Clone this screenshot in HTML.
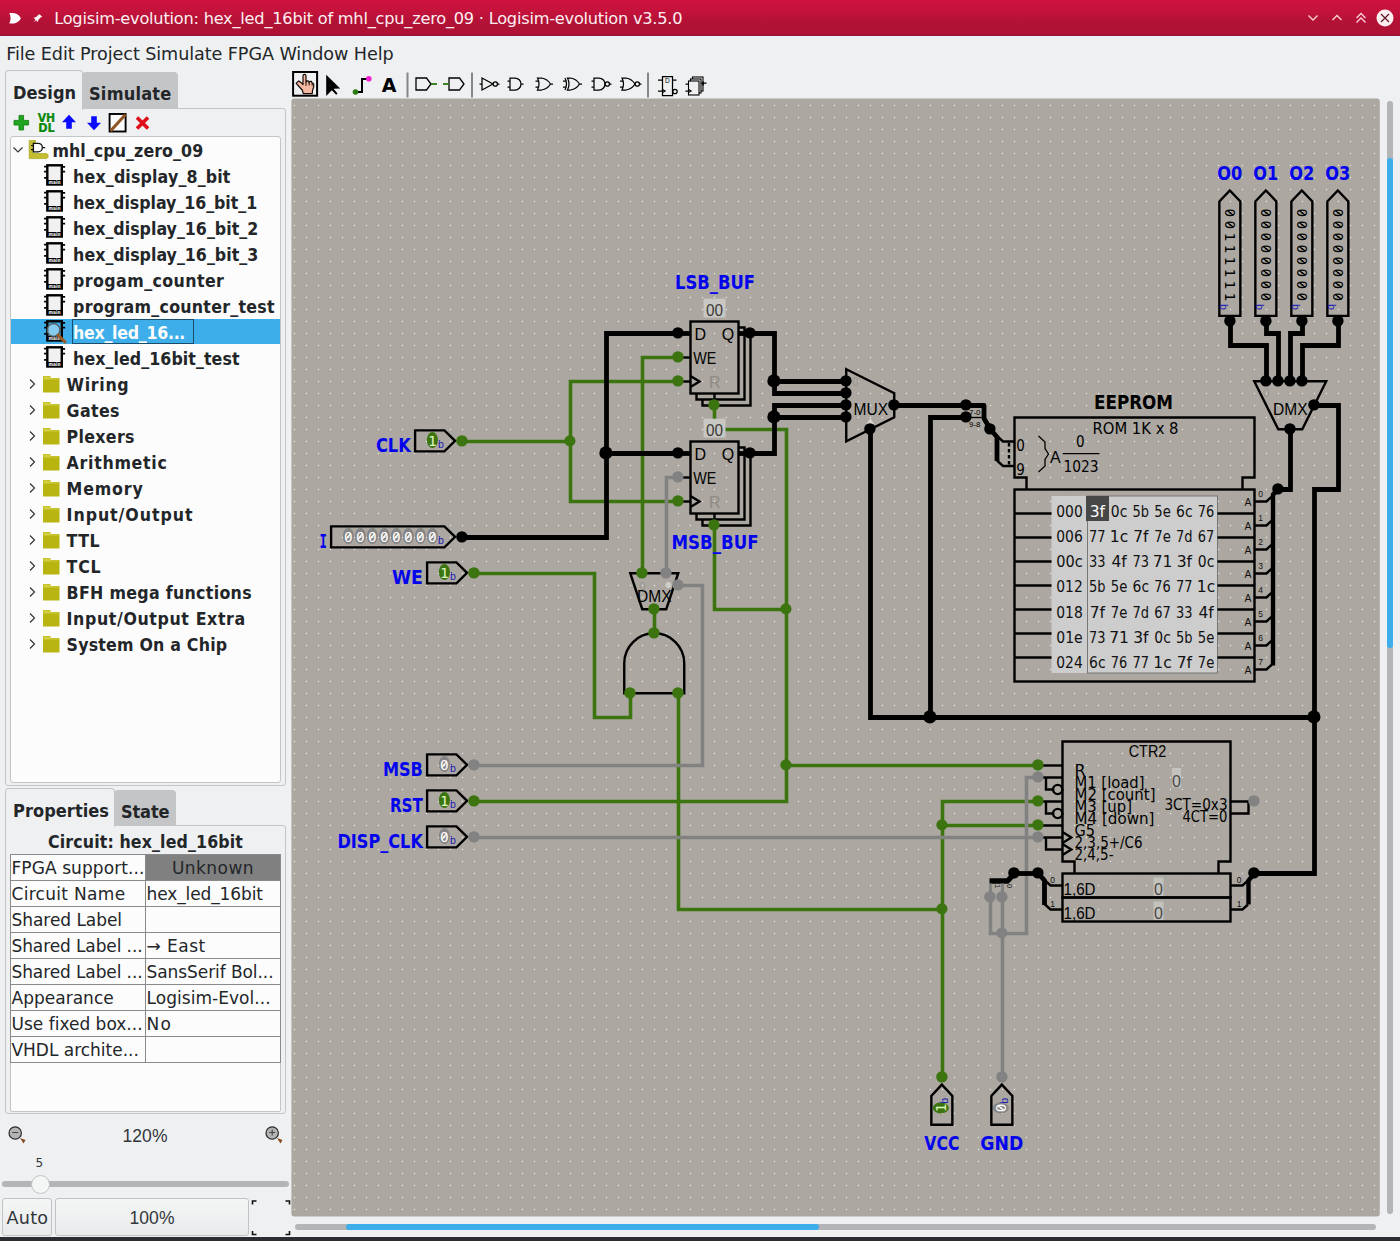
<!DOCTYPE html>
<html lang="en"><head><meta charset="utf-8"><title>Logisim-evolution</title>
<style>
*{box-sizing:border-box;margin:0;padding:0}
html,body{width:1400px;height:1241px;overflow:hidden;background:#eff0f1}
body{position:relative;font-family:"DejaVu Sans","Liberation Sans",sans-serif;font-size:17.6px;color:#232629}
.abs{position:absolute}
.t{position:absolute;white-space:nowrap;line-height:1}
.b{font-family:"DejaVu Sans Condensed","DejaVu Sans","Liberation Sans",sans-serif;font-weight:bold}
#titlebar{left:0;top:0;width:1400px;height:36px;background:linear-gradient(#cf1240 0%,#c4123b 30%,#b31236 60%,#ad1234 96%,#8f1838 100%)}
#titleline{left:0;top:36px;width:1400px;height:1px;background:#e0f2fc}
#bottombar{left:0;top:1237px;width:1400px;height:4px;background:#2a2e32}
.tabpanel{border:1px solid #c3c5c7;border-radius:3px;background:#eff0f1}
.tab{border:1px solid #c3c5c7;border-bottom:none;border-radius:4px 4px 0 0;background:#eff0f1}
.tabin{background:#c4c5c6;border-radius:4px 4px 0 0}
.white{background:#fcfcfc;border:1px solid #c3c5c7;border-radius:3px}
.cell{position:absolute;border:1px solid #8a8a8a;background:#fcfcfc}
.btn{border:1px solid #c0c2c4;border-radius:3px;background:linear-gradient(#f4f5f5,#e9eaeb)}
</style></head>
<body>
<div class="abs" id="titlebar"></div><div class="abs" id="titleline"></div><div class="abs" id="bottombar"></div>
<svg class="abs" style="left:0;top:0" width="60" height="36" viewBox="0 0 60 36">
<path d="M9.3 13 L12.5 13 C17 13 19.8 15.8 20.8 18.3 C19.8 20.8 17 23.6 12.5 23.6 L9.3 23.6 C11 20.3 11 16.3 9.3 13 Z" fill="#fff"/>
<g fill="#fff" stroke="none"><path d="M39.6 14.2 L42.2 16.8 L40.6 17.4 L38.4 19.8 L37.8 22 L33.6 17.8 L35.8 17.2 L38.2 15 Z"/><path d="M35.6 20.2 L34 21.8 L33.8 21.6 Z" /><path d="M35.9 19.6 L36.4 20.1 L33.6 22.6 Z"/></g>
</svg>
<div class="t " id="x" style="left:54.2px;top:19.3px;transform:translateY(-50%);font-size:16.2px;color:#fdeef1;letter-spacing:-0.227px;">Logisim-evolution: hex_led_16bit of mhl_cpu_zero_09 · Logisim-evolution v3.5.0</div>
<svg class="abs" style="left:1300px;top:0" width="100" height="36" viewBox="1300 0 100 36">
<g fill="none" stroke="#ffd3db" stroke-width="1.3"><path d="M1308.5 15.5 L1313 20 L1317.5 15.5"/><path d="M1332.5 20 L1337 15.5 L1341.5 20"/>
<path d="M1356.5 18 L1361 13.5 L1365.5 18"/><path d="M1356.5 22.5 L1361 18 L1365.5 22.5"/></g>
<circle cx="1385" cy="18" r="8.5" fill="#fdeef0"/><path d="M1381 14 L1389 22 M1389 14 L1381 22" stroke="#5e1727" stroke-width="1.2" fill="none"/>
</svg>
<div class="t " id="menu" style="left:6.2px;top:54.7px;transform:translateY(-50%);letter-spacing:-0.081px;">File Edit Project Simulate FPGA Window Help</div>
<div class="abs tabpanel" style="left:5px;top:108px;width:281px;height:678px"></div>
<div class="abs tabin" style="left:82px;top:72px;width:96px;height:37px"></div>
<div class="abs tab" style="left:5px;top:70px;width:78px;height:40px"></div>
<div class="t b" id="design" style="left:13px;top:92.5px;transform:translateY(-50%);font-size:18px;letter-spacing:0.07px;">Design</div>
<div class="t b" id="simulate" style="left:89px;top:93.5px;transform:translateY(-50%);font-size:18px;letter-spacing:0.21px;">Simulate</div>
<svg class="abs" style="left:8px;top:110px" width="150" height="26" viewBox="8 110 150 26">
<path d="M19 115.4 h4.6 v5 h5 v4.6 h-5 v5 h-4.6 v-5 h-5 v-4.6 h5z" fill="#1fa51f" stroke="#0c7a0c" stroke-width="0.8"/>
<g font-family="DejaVu Sans Condensed,DejaVu Sans,Liberation Sans,sans-serif" font-weight="bold" font-size="11.5" fill="#0a8a0a" stroke="#0a8a0a" stroke-width="0.2" text-anchor="middle"><text x="46.4" y="122.3" textLength="17.5" lengthAdjust="spacingAndGlyphs">VH</text><text x="46.4" y="132.4" textLength="16.5" lengthAdjust="spacingAndGlyphs">DL</text></g>
<path d="M69 114.8 l7 7.5 h-4.2 v6.5 h-5.6 v-6.5 h-4.200z" fill="#0a0aff"/>
<path d="M94 130.2 l7 -7.5 h-4.2 v-6.5 h-5.6 v6.5 h-4.200z" fill="#0a0aff"/>
<rect x="109.6" y="114" width="16" height="17.5" fill="#fcfcfc" stroke="#000" stroke-width="1.9"/><path d="M110.5 131 L125.5 114.5" stroke="#8f5320" stroke-width="3" fill="none"/>
<path d="M137 117.5 l11 11 M148 117.5 l-11 11" stroke="#e0101a" stroke-width="3.6" fill="none"/>
</svg>
<div class="abs white" style="left:10px;top:136px;width:271px;height:647px"></div>
<div class="abs" style="left:11px;top:319px;width:269px;height:25px;background:#3daee9"></div>
<div class="abs" style="left:72px;top:319px;width:122px;height:25px;border:1px solid #1a4d6c;background:#3daee9"></div>
<svg class="abs" style="left:10px;top:137px" width="60" height="26" viewBox="10 137 60 26">
<path d="M13.5 147.5 l4.5 4.5 l4.5 -4.5" fill="none" stroke="#31363b" stroke-width="1.2"/>
<path d="M29.2 140.5 h6.3 v2.2 h-2.3 v10.8 h13.6 l1.3 1.4 v2.3 l-1.2 1.4 h-17.700z" fill="#c2be30" stroke="#a9a51e" stroke-width="0.7"/>
<path d="M33.4 143.3 h4.7 a4.3 4.3 0 0 1 0 8.6 h-4.700z" fill="#fcfcfc" stroke="#111" stroke-width="1.3"/><path d="M31 145.5 h2.4 M31 149.6 h2.4 M42.4 147.6 h2.8" stroke="#111" stroke-width="1.2"/>
</svg>
<div class="t b" id="root" style="left:52.4px;top:152px;transform:translateY(-50%);letter-spacing:0.087px;">mhl_cpu_zero_09</div>
<svg class="abs" style="left:42px;top:163px" width="28" height="26" viewBox="0 0 28 26">
<rect x="5.3" y="2.3" width="14.5" height="19.2" fill="#f1f1f1" stroke="#000" stroke-width="2.4"/>
<path d="M2.1 3.6 h2.4 M2.1 8.7 h2.4 M2.1 14.9 h2.4 M20.8 3.8 h2.3 M20.8 8.7 h2.3" stroke="#000" stroke-width="1.7"/>
<rect x="5.3" y="17" width="14.5" height="5" fill="#000"/>
<text x="12.6" y="21.3" font-size="5.2" font-weight="bold" text-anchor="middle" fill="#fcfcfc" font-family="DejaVu Sans,Liberation Sans,sans-serif" textLength="12" lengthAdjust="spacingAndGlyphs">main</text>
</svg>
<div class="t b" id="item0" style="left:73.1px;top:178px;transform:translateY(-50%);letter-spacing:0.164px;">hex_display_8_bit</div>
<svg class="abs" style="left:42px;top:189px" width="28" height="26" viewBox="0 0 28 26">
<rect x="5.3" y="2.3" width="14.5" height="19.2" fill="#f1f1f1" stroke="#000" stroke-width="2.4"/>
<path d="M2.1 3.6 h2.4 M2.1 8.7 h2.4 M2.1 14.9 h2.4 M20.8 3.8 h2.3 M20.8 8.7 h2.3" stroke="#000" stroke-width="1.7"/>
<rect x="5.3" y="17" width="14.5" height="5" fill="#000"/>
<text x="12.6" y="21.3" font-size="5.2" font-weight="bold" text-anchor="middle" fill="#fcfcfc" font-family="DejaVu Sans,Liberation Sans,sans-serif" textLength="12" lengthAdjust="spacingAndGlyphs">main</text>
</svg>
<div class="t b" id="item1" style="left:73.1px;top:204px;transform:translateY(-50%);letter-spacing:-0.027px;">hex_display_16_bit_1</div>
<svg class="abs" style="left:42px;top:215px" width="28" height="26" viewBox="0 0 28 26">
<rect x="5.3" y="2.3" width="14.5" height="19.2" fill="#f1f1f1" stroke="#000" stroke-width="2.4"/>
<path d="M2.1 3.6 h2.4 M2.1 8.7 h2.4 M2.1 14.9 h2.4 M20.8 3.8 h2.3 M20.8 8.7 h2.3" stroke="#000" stroke-width="1.7"/>
<rect x="5.3" y="17" width="14.5" height="5" fill="#000"/>
<text x="12.6" y="21.3" font-size="5.2" font-weight="bold" text-anchor="middle" fill="#fcfcfc" font-family="DejaVu Sans,Liberation Sans,sans-serif" textLength="12" lengthAdjust="spacingAndGlyphs">main</text>
</svg>
<div class="t b" id="item2" style="left:73.1px;top:230px;transform:translateY(-50%);letter-spacing:0.026px;">hex_display_16_bit_2</div>
<svg class="abs" style="left:42px;top:241px" width="28" height="26" viewBox="0 0 28 26">
<rect x="5.3" y="2.3" width="14.5" height="19.2" fill="#f1f1f1" stroke="#000" stroke-width="2.4"/>
<path d="M2.1 3.6 h2.4 M2.1 8.7 h2.4 M2.1 14.9 h2.4 M20.8 3.8 h2.3 M20.8 8.7 h2.3" stroke="#000" stroke-width="1.7"/>
<rect x="5.3" y="17" width="14.5" height="5" fill="#000"/>
<text x="12.6" y="21.3" font-size="5.2" font-weight="bold" text-anchor="middle" fill="#fcfcfc" font-family="DejaVu Sans,Liberation Sans,sans-serif" textLength="12" lengthAdjust="spacingAndGlyphs">main</text>
</svg>
<div class="t b" id="item3" style="left:73.1px;top:256px;transform:translateY(-50%);letter-spacing:0.026px;">hex_display_16_bit_3</div>
<svg class="abs" style="left:42px;top:267px" width="28" height="26" viewBox="0 0 28 26">
<rect x="5.3" y="2.3" width="14.5" height="19.2" fill="#f1f1f1" stroke="#000" stroke-width="2.4"/>
<path d="M2.1 3.6 h2.4 M2.1 8.7 h2.4 M2.1 14.9 h2.4 M20.8 3.8 h2.3 M20.8 8.7 h2.3" stroke="#000" stroke-width="1.7"/>
<rect x="5.3" y="17" width="14.5" height="5" fill="#000"/>
<text x="12.6" y="21.3" font-size="5.2" font-weight="bold" text-anchor="middle" fill="#fcfcfc" font-family="DejaVu Sans,Liberation Sans,sans-serif" textLength="12" lengthAdjust="spacingAndGlyphs">main</text>
</svg>
<div class="t b" id="item4" style="left:73.1px;top:282px;transform:translateY(-50%);letter-spacing:0.419px;">progam_counter</div>
<svg class="abs" style="left:42px;top:293px" width="28" height="26" viewBox="0 0 28 26">
<rect x="5.3" y="2.3" width="14.5" height="19.2" fill="#f1f1f1" stroke="#000" stroke-width="2.4"/>
<path d="M2.1 3.6 h2.4 M2.1 8.7 h2.4 M2.1 14.9 h2.4 M20.8 3.8 h2.3 M20.8 8.7 h2.3" stroke="#000" stroke-width="1.7"/>
<rect x="5.3" y="17" width="14.5" height="5" fill="#000"/>
<text x="12.6" y="21.3" font-size="5.2" font-weight="bold" text-anchor="middle" fill="#fcfcfc" font-family="DejaVu Sans,Liberation Sans,sans-serif" textLength="12" lengthAdjust="spacingAndGlyphs">main</text>
</svg>
<div class="t b" id="item5" style="left:73.1px;top:308px;transform:translateY(-50%);letter-spacing:0.27px;">program_counter_test</div>
<svg class="abs" style="left:42px;top:319px" width="28" height="26" viewBox="0 0 28 26">
<rect x="5.3" y="2.3" width="14.5" height="19.2" fill="#3daee9" stroke="#000" stroke-width="2.4"/>
<path d="M2.1 3.6 h2.4 M2.1 8.7 h2.4 M2.1 14.9 h2.4 M20.8 3.8 h2.3 M20.8 8.7 h2.3" stroke="#000" stroke-width="1.7"/>
<rect x="5.3" y="17" width="14.5" height="5" fill="#000"/>
<text x="12.6" y="21.3" font-size="5.2" font-weight="bold" text-anchor="middle" fill="#fcfcfc" font-family="DejaVu Sans,Liberation Sans,sans-serif" textLength="12" lengthAdjust="spacingAndGlyphs">main</text>
<circle cx="11.5" cy="11" r="6.3" fill="#cfe9f8" fill-opacity="0.5" stroke="#5a5a5a" stroke-width="1.2"/><path d="M16 16 L23 23" stroke="#9a5a20" stroke-width="3" stroke-linecap="round"/></svg>
<div class="t b" id="item6" style="left:73.1px;top:334px;transform:translateY(-50%);color:#fcfcfc;letter-spacing:-0.276px;">hex_led_16...</div>
<svg class="abs" style="left:42px;top:345px" width="28" height="26" viewBox="0 0 28 26">
<rect x="5.3" y="2.3" width="14.5" height="19.2" fill="#f1f1f1" stroke="#000" stroke-width="2.4"/>
<path d="M2.1 3.6 h2.4 M2.1 8.7 h2.4 M2.1 14.9 h2.4 M20.8 3.8 h2.3 M20.8 8.7 h2.3" stroke="#000" stroke-width="1.7"/>
<rect x="5.3" y="17" width="14.5" height="5" fill="#000"/>
<text x="12.6" y="21.3" font-size="5.2" font-weight="bold" text-anchor="middle" fill="#fcfcfc" font-family="DejaVu Sans,Liberation Sans,sans-serif" textLength="12" lengthAdjust="spacingAndGlyphs">main</text>
</svg>
<div class="t b" id="item7" style="left:73.1px;top:360px;transform:translateY(-50%);letter-spacing:0.077px;">hex_led_16bit_test</div>
<svg class="abs" style="left:26px;top:371px" width="36" height="26" viewBox="0 0 36 26">
<path d="M4 8.5 l4.5 4.5 l-4.5 4.5" fill="none" stroke="#31363b" stroke-width="1.2"/>
<path d="M17 5 h7.5 v2 h9 v14.5 h-16.500z" fill="#b9b510"/><path d="M17.4 5.4 h6.7 v2 h9 v1.2 h-15.700z" fill="#d2cf45"/>
</svg>
<div class="t b" id="lib0" style="left:66.6px;top:386px;transform:translateY(-50%);letter-spacing:0.676px;">Wiring</div>
<svg class="abs" style="left:26px;top:397px" width="36" height="26" viewBox="0 0 36 26">
<path d="M4 8.5 l4.5 4.5 l-4.5 4.5" fill="none" stroke="#31363b" stroke-width="1.2"/>
<path d="M17 5 h7.5 v2 h9 v14.5 h-16.500z" fill="#b9b510"/><path d="M17.4 5.4 h6.7 v2 h9 v1.2 h-15.700z" fill="#d2cf45"/>
</svg>
<div class="t b" id="lib1" style="left:66.6px;top:412px;transform:translateY(-50%);letter-spacing:0.373px;">Gates</div>
<svg class="abs" style="left:26px;top:423px" width="36" height="26" viewBox="0 0 36 26">
<path d="M4 8.5 l4.5 4.5 l-4.5 4.5" fill="none" stroke="#31363b" stroke-width="1.2"/>
<path d="M17 5 h7.5 v2 h9 v14.5 h-16.500z" fill="#b9b510"/><path d="M17.4 5.4 h6.7 v2 h9 v1.2 h-15.700z" fill="#d2cf45"/>
</svg>
<div class="t b" id="lib2" style="left:66.6px;top:438px;transform:translateY(-50%);letter-spacing:0.327px;">Plexers</div>
<svg class="abs" style="left:26px;top:449px" width="36" height="26" viewBox="0 0 36 26">
<path d="M4 8.5 l4.5 4.5 l-4.5 4.5" fill="none" stroke="#31363b" stroke-width="1.2"/>
<path d="M17 5 h7.5 v2 h9 v14.5 h-16.500z" fill="#b9b510"/><path d="M17.4 5.4 h6.7 v2 h9 v1.2 h-15.700z" fill="#d2cf45"/>
</svg>
<div class="t b" id="lib3" style="left:66.6px;top:464px;transform:translateY(-50%);letter-spacing:0.696px;">Arithmetic</div>
<svg class="abs" style="left:26px;top:475px" width="36" height="26" viewBox="0 0 36 26">
<path d="M4 8.5 l4.5 4.5 l-4.5 4.5" fill="none" stroke="#31363b" stroke-width="1.2"/>
<path d="M17 5 h7.5 v2 h9 v14.5 h-16.500z" fill="#b9b510"/><path d="M17.4 5.4 h6.7 v2 h9 v1.2 h-15.700z" fill="#d2cf45"/>
</svg>
<div class="t b" id="lib4" style="left:66.6px;top:490px;transform:translateY(-50%);letter-spacing:0.84px;">Memory</div>
<svg class="abs" style="left:26px;top:501px" width="36" height="26" viewBox="0 0 36 26">
<path d="M4 8.5 l4.5 4.5 l-4.5 4.5" fill="none" stroke="#31363b" stroke-width="1.2"/>
<path d="M17 5 h7.5 v2 h9 v14.5 h-16.500z" fill="#b9b510"/><path d="M17.4 5.4 h6.7 v2 h9 v1.2 h-15.700z" fill="#d2cf45"/>
</svg>
<div class="t b" id="lib5" style="left:66.6px;top:516px;transform:translateY(-50%);letter-spacing:0.938px;">Input/Output</div>
<svg class="abs" style="left:26px;top:527px" width="36" height="26" viewBox="0 0 36 26">
<path d="M4 8.5 l4.5 4.5 l-4.5 4.5" fill="none" stroke="#31363b" stroke-width="1.2"/>
<path d="M17 5 h7.5 v2 h9 v14.5 h-16.500z" fill="#b9b510"/><path d="M17.4 5.4 h6.7 v2 h9 v1.2 h-15.700z" fill="#d2cf45"/>
</svg>
<div class="t b" id="lib6" style="left:66.6px;top:542px;transform:translateY(-50%);letter-spacing:0.503px;">TTL</div>
<svg class="abs" style="left:26px;top:553px" width="36" height="26" viewBox="0 0 36 26">
<path d="M4 8.5 l4.5 4.5 l-4.5 4.5" fill="none" stroke="#31363b" stroke-width="1.2"/>
<path d="M17 5 h7.5 v2 h9 v14.5 h-16.500z" fill="#b9b510"/><path d="M17.4 5.4 h6.7 v2 h9 v1.2 h-15.700z" fill="#d2cf45"/>
</svg>
<div class="t b" id="lib7" style="left:66.6px;top:568px;transform:translateY(-50%);letter-spacing:0.8px;">TCL</div>
<svg class="abs" style="left:26px;top:579px" width="36" height="26" viewBox="0 0 36 26">
<path d="M4 8.5 l4.5 4.5 l-4.5 4.5" fill="none" stroke="#31363b" stroke-width="1.2"/>
<path d="M17 5 h7.5 v2 h9 v14.5 h-16.500z" fill="#b9b510"/><path d="M17.4 5.4 h6.7 v2 h9 v1.2 h-15.700z" fill="#d2cf45"/>
</svg>
<div class="t b" id="lib8" style="left:66.6px;top:594px;transform:translateY(-50%);letter-spacing:0.309px;">BFH mega functions</div>
<svg class="abs" style="left:26px;top:605px" width="36" height="26" viewBox="0 0 36 26">
<path d="M4 8.5 l4.5 4.5 l-4.5 4.5" fill="none" stroke="#31363b" stroke-width="1.2"/>
<path d="M17 5 h7.5 v2 h9 v14.5 h-16.500z" fill="#b9b510"/><path d="M17.4 5.4 h6.7 v2 h9 v1.2 h-15.700z" fill="#d2cf45"/>
</svg>
<div class="t b" id="lib9" style="left:66.6px;top:620px;transform:translateY(-50%);letter-spacing:0.614px;">Input/Output Extra</div>
<svg class="abs" style="left:26px;top:631px" width="36" height="26" viewBox="0 0 36 26">
<path d="M4 8.5 l4.5 4.5 l-4.5 4.5" fill="none" stroke="#31363b" stroke-width="1.2"/>
<path d="M17 5 h7.5 v2 h9 v14.5 h-16.500z" fill="#b9b510"/><path d="M17.4 5.4 h6.7 v2 h9 v1.2 h-15.700z" fill="#d2cf45"/>
</svg>
<div class="t b" id="lib10" style="left:66.6px;top:646px;transform:translateY(-50%);letter-spacing:0.199px;">System On a Chip</div>
<div class="abs tabpanel" style="left:5px;top:825px;width:281px;height:289px"></div>
<div class="abs tabin" style="left:114px;top:790px;width:62px;height:36px"></div>
<div class="abs tab" style="left:5px;top:788px;width:110px;height:39px"></div>
<div class="t b" id="props" style="left:13px;top:810.5px;transform:translateY(-50%);font-size:18px;letter-spacing:0.059px;">Properties</div>
<div class="t b" id="state" style="left:121px;top:811.5px;transform:translateY(-50%);font-size:18px;letter-spacing:-0.141px;">State</div>
<div class="abs white" style="left:10px;top:854px;width:271px;height:258px;border-radius:2px"></div>
<div class="t b" id="ptitle" style="left:10px;width:271px;text-align:center;top:843px;transform:translateY(-50%);letter-spacing:0.124px;">Circuit: hex_led_16bit</div>
<div class="cell" style="left:10px;top:854px;width:136px;height:27px"></div><div class="cell" style="left:145px;top:854px;width:136px;height:27px;background:#808080;"></div>
<div class="t " id="pa0" style="left:11.5px;top:867.8px;transform:translateY(-50%);font-size:17px;letter-spacing:0.084px;">FPGA support...</div>
<div class="t" id="pb0" style="left:146px;width:134px;text-align:center;font-size:17px;top:867.8px;transform:translateY(-50%);letter-spacing:0.446px;">Unknown</div>
<div class="cell" style="left:10px;top:880px;width:136px;height:27px"></div><div class="cell" style="left:145px;top:880px;width:136px;height:27px;"></div>
<div class="t " id="pa1" style="left:11.5px;top:893.8px;transform:translateY(-50%);font-size:17px;letter-spacing:0.302px;">Circuit Name</div>
<div class="t " id="pb1" style="left:146.5px;top:893.8px;transform:translateY(-50%);font-size:17px;letter-spacing:-0.115px;">hex_led_16bit</div>
<div class="cell" style="left:10px;top:906px;width:136px;height:27px"></div><div class="cell" style="left:145px;top:906px;width:136px;height:27px;"></div>
<div class="t " id="pa2" style="left:11.5px;top:919.8px;transform:translateY(-50%);font-size:17px;letter-spacing:-0.048px;">Shared Label</div>
<div class="cell" style="left:10px;top:932px;width:136px;height:27px"></div><div class="cell" style="left:145px;top:932px;width:136px;height:27px;"></div>
<div class="t " id="pa3" style="left:11.5px;top:945.8px;transform:translateY(-50%);font-size:17px;letter-spacing:-0.109px;">Shared Label ...</div>
<div class="t " id="pb3" style="left:146.5px;top:945.8px;transform:translateY(-50%);font-size:17px;letter-spacing:0.471px;">→ East</div>
<div class="cell" style="left:10px;top:958px;width:136px;height:27px"></div><div class="cell" style="left:145px;top:958px;width:136px;height:27px;"></div>
<div class="t " id="pa4" style="left:11.5px;top:971.8px;transform:translateY(-50%);font-size:17px;letter-spacing:-0.109px;">Shared Label ...</div>
<div class="t " id="pb4" style="left:146.5px;top:971.8px;transform:translateY(-50%);font-size:17px;letter-spacing:-0.074px;">SansSerif Bol...</div>
<div class="cell" style="left:10px;top:984px;width:136px;height:27px"></div><div class="cell" style="left:145px;top:984px;width:136px;height:27px;"></div>
<div class="t " id="pa5" style="left:11.5px;top:997.8px;transform:translateY(-50%);font-size:17px;letter-spacing:0.014px;">Appearance</div>
<div class="t " id="pb5" style="left:146.5px;top:997.8px;transform:translateY(-50%);font-size:17px;letter-spacing:0.043px;">Logisim-Evol...</div>
<div class="cell" style="left:10px;top:1010px;width:136px;height:27px"></div><div class="cell" style="left:145px;top:1010px;width:136px;height:27px;"></div>
<div class="t " id="pa6" style="left:11.5px;top:1023.8px;transform:translateY(-50%);font-size:17px;letter-spacing:0.006px;">Use fixed box...</div>
<div class="t " id="pb6" style="left:146.5px;top:1023.8px;transform:translateY(-50%);font-size:17px;letter-spacing:1.375px;">No</div>
<div class="cell" style="left:10px;top:1036px;width:136px;height:27px"></div><div class="cell" style="left:145px;top:1036px;width:136px;height:27px;"></div>
<div class="t " id="pa7" style="left:11.5px;top:1049.8px;transform:translateY(-50%);font-size:17px;letter-spacing:-0.021px;">VHDL archite...</div>
<svg class="abs" style="left:4px;top:1122px" width="284" height="26" viewBox="4 1122 284 26">
<g fill="#b4b4b4" stroke="#2a2a2a" stroke-width="1.2"><circle cx="15.2" cy="1133" r="6.2"/><circle cx="272.2" cy="1133" r="6.2"/></g>
<path d="M12.2 1132.5 h6 M269.2 1132.5 h6 M272.2 1129.5 v6" stroke="#444" stroke-width="1.1"/>
<path d="M20 1138 L25.5 1140 L23.5 1143.5 Z M277 1138 L282.5 1140 L280.5 1143.5 Z" fill="#8a4a1c"/>
</svg>
<div class="t" id="z120" style="left:95px;width:100px;text-align:center;top:1137px;transform:translateY(-50%);color:#31363b;font-family:Liberation Sans,sans-serif;font-size:17.5px;letter-spacing:0.111px;">120%</div>
<div class="t " style="left:35.5px;top:1163px;transform:translateY(-50%);font-size:12px;color:#31363b;">5</div>
<div class="abs" style="left:2px;top:1181px;width:287px;height:6px;border-radius:3px;background:#b3b5b7"></div>
<div class="abs" style="left:31px;top:1174.500px;width:19px;height:19px;border-radius:10px;background:#f4f5f5;border:1px solid #c2c4c6"></div>
<div class="abs btn" style="left:2px;top:1198px;width:50px;height:38px"></div>
<div class="abs btn" style="left:54.500px;top:1198px;width:194px;height:38px"></div>
<div class="t " id="auto" style="left:6.5px;top:1218.7px;transform:translateY(-50%);color:#31363b;letter-spacing:0.247px;">Auto</div>
<div class="t" id="z100" style="left:55px;width:194px;text-align:center;top:1218.700px;transform:translateY(-50%);color:#31363b;font-family:Liberation Sans,sans-serif;font-size:17.5px;letter-spacing:0.111px;">100%</div>
<svg class="abs" style="left:250px;top:1198px" width="42" height="40" viewBox="250 1198 42 40">
<path d="M252.5 1204.5 v-3.5 h4 M285.5 1201 h4 v3.5 M252.5 1231 v3.5 h4 M285.5 1234.5 h4 v-3.5" fill="none" stroke="#111" stroke-width="1.6"/></svg>
<svg class="abs" style="left:288px;top:68px" width="440" height="32" viewBox="288 68 440 32"><rect x="293.1" y="72" width="24" height="23.7" fill="#f0f1f2" stroke="#000" stroke-width="2"/><path d="M296.2 83.3 L298.8 80.9 L301.2 82.7 L303 84.6 V76 Q303 74.4 304.5 74.4 Q306 74.4 306 76 V82.3 L306.9 80.9 L308.3 80.9 L309.2 82.7 L310 81.3 L311.3 81.3 L312.2 83.2 L312.7 83 L313.7 84.2 V87 L312.6 90 L312.2 93.7 H303.4 L302.2 90 L299 86.5 Z" fill="#f3b9a2" stroke="#150c08" stroke-width="1.2" stroke-linejoin="round"/><path d="M306 82.3 V85.8 M309.2 82.7 V85.4 M312.2 83.4 V85.6" stroke="#150c08" stroke-width="1" fill="none"/><path d="M326.2 74.8 V96 L331.8 90.3 L336.2 94.8 L337.5 93.6 L333.6 88.8 L340.2 88.6 Z" fill="#000"/><path d="M356 92 H362 V79 H368.5" fill="none" stroke="#000" stroke-width="2"/><circle cx="355.5" cy="92" r="2.8" fill="#2a7a10"/><circle cx="368.8" cy="78.8" r="2.8" fill="#f020d0"/><text x="389" y="91.5" font-size="19" font-weight="bold" text-anchor="middle" font-family="DejaVu Sans,Liberation Sans,sans-serif" fill="#000">A</text><path d="M407.5 72.5 V97.5" stroke="#85878a" stroke-width="2"/><path d="M472 72.5 V97.5" stroke="#85878a" stroke-width="2"/><path d="M648 72.5 V97.5" stroke="#85878a" stroke-width="2"/><path d="M416 78 h10.5 l4.5 6 l-4.5 6 h-10.500z" fill="none" stroke="#000" stroke-width="1.3"/><path d="M431 84 h6" stroke="#2a7a10" stroke-width="1.8"/><path d="M449 78 h10.5 l4.5 6 l-4.5 6 h-10.500z" fill="none" stroke="#000" stroke-width="1.3"/><path d="M443 84 h6" stroke="#2a7a10" stroke-width="1.8"/><path d="M482 78 v12 l11 -6z M479.5 84 h2.5 M497.5 84 h2" fill="none" stroke="#000" stroke-width="1.250"/><circle cx="495.3" cy="84" r="2.2" fill="none" stroke="#000" stroke-width="1.250"/><path d="M510 78 h5 a6 6 0 0 1 0 12 h-5z M507.5 81 h2.5 M507.5 87 h2.5 M521 84 h2.5" fill="none" stroke="#000" stroke-width="1.250"/><path d="M537.5 78 h4 q6 1 9 6 q-3 5 -9 6 h-4 q3 -6 0 -12z M535.5 81 h3 M535.5 87 h3 M550.5 84 h2.5" fill="none" stroke="#000" stroke-width="1.250"/><path d="M567.5 78 h3 q6 1 9 6 q-3 5 -9 6 h-3 q3 -6 0 -12z M565 78 q3 6 0 12 M563 81 h3.5 M563 87 h3.5 M579.5 84 h2.5" fill="none" stroke="#000" stroke-width="1.250"/><path d="M594 78 h5 a6 6 0 0 1 0 12 h-5z M591.5 81 h2.5 M591.5 87 h2.5 M609.5 84 h2" fill="none" stroke="#000" stroke-width="1.250"/><circle cx="607.3" cy="84" r="2.2" fill="none" stroke="#000" stroke-width="1.250"/><path d="M622 78 h4 q6 1 9 6 q-3 5 -9 6 h-4 q3 -6 0 -12z M620 81 h3 M620 87 h3 M639.5 84 h2" fill="none" stroke="#000" stroke-width="1.250"/><circle cx="637.3" cy="84" r="2.2" fill="none" stroke="#000" stroke-width="1.250"/><path d="M662.5 76.5 h10 v19 h-10z M658 80 h4.5 M658 91 h4.5 M672.5 80 h4 M662.5 89.5 l2.5 1.5 l-2.5 1.5" fill="none" stroke="#000" stroke-width="1.250"/><circle cx="675" cy="91.5" r="2.2" fill="none" stroke="#000" stroke-width="1.250"/><text x="667.3" y="83.3" font-size="6.5" text-anchor="middle" font-family="Liberation Sans,sans-serif" fill="#000">D</text><rect x="692.5" y="77" width="10.5" height="14" fill="#eff0f1" stroke="#000" stroke-width="1.1"/><rect x="690.5" y="79" width="10.5" height="14" fill="#eff0f1" stroke="#000" stroke-width="1.1"/><rect x="688.5" y="81" width="10.5" height="14" fill="#eff0f1" stroke="#000" stroke-width="1.1"/><path d="M685.5 84 h3 M685.5 91 h3 M688.5 89.5 l2.5 1.5 l-2.5 1.5 M701 83 h5.5" fill="none" stroke="#000" stroke-width="1.250"/><path d="M703 81.5 v4" stroke="#000" stroke-width="1.6"/></svg>
<div class="abs" style="left:1387px;top:101px;width:6px;height:1113px;border-radius:3px;background:#b3b5b7"></div>
<div class="abs" style="left:1387px;top:158px;width:6px;height:490px;border-radius:3px;background:#3daee9"></div>
<div class="abs" style="left:295px;top:1224px;width:1081px;height:6px;border-radius:3px;background:#b3b5b7"></div>
<div class="abs" style="left:346px;top:1224px;width:473px;height:6px;border-radius:3px;background:#3daee9"></div>
<svg class="abs" style="left:291px;top:98px" width="1089" height="1119" viewBox="291 98 1089 1119">
<defs><pattern id="grid" x="288" y="99" width="12" height="12" patternUnits="userSpaceOnUse"><rect x="5.9" y="5.9" width="1.150" height="1.150" fill="#f2f0eb"/></pattern><clipPath id="cv"><rect x="291.4" y="98.4" width="1088.4" height="1118.2" rx="3"/></clipPath></defs>
<g clip-path="url(#cv)">
<rect x="291" y="98" width="1089" height="1119" fill="#aca8a1"/>
<rect x="291" y="98" width="1089" height="1119" fill="url(#grid)"/>
<g transform="translate(0.5 0.5)">
<path d="M462 441 L570 441" fill="none" stroke="#3c7510" stroke-width="3.6" stroke-linejoin="miter" stroke-linecap="square"/>
<path d="M678 381 L570 381 L570 501 L678 501" fill="none" stroke="#3c7510" stroke-width="3.6" stroke-linejoin="miter" stroke-linecap="square"/>
<path d="M474 573 L594 573 L594 717 L630 717 L630 693" fill="none" stroke="#3c7510" stroke-width="3.6" stroke-linejoin="miter" stroke-linecap="square"/>
<path d="M642 573 L642 357 L678 357" fill="none" stroke="#3c7510" stroke-width="3.6" stroke-linejoin="miter" stroke-linecap="square"/>
<path d="M654 609 L654 633" fill="none" stroke="#3c7510" stroke-width="3.6" stroke-linejoin="miter" stroke-linecap="square"/>
<path d="M474 801 L786 801 L786 429 L714 429 L714 405" fill="none" stroke="#3c7510" stroke-width="3.6" stroke-linejoin="miter" stroke-linecap="square"/>
<path d="M714 525 L714 609 L786 609" fill="none" stroke="#3c7510" stroke-width="3.6" stroke-linejoin="miter" stroke-linecap="square"/>
<path d="M786 765 L1038 765" fill="none" stroke="#3c7510" stroke-width="3.6" stroke-linejoin="miter" stroke-linecap="square"/>
<path d="M678 693 L678 909 L942 909" fill="none" stroke="#3c7510" stroke-width="3.6" stroke-linejoin="miter" stroke-linecap="square"/>
<path d="M942 1077 L942 801 L1038 801" fill="none" stroke="#3c7510" stroke-width="3.6" stroke-linejoin="miter" stroke-linecap="square"/>
<path d="M942 825 L1038 825" fill="none" stroke="#3c7510" stroke-width="3.6" stroke-linejoin="miter" stroke-linecap="square"/>
<path d="M474 765 L702 765 L702 585 L678 585" fill="none" stroke="#828282" stroke-width="3.6" stroke-linejoin="miter" stroke-linecap="square"/>
<path d="M666 573 L666 477 L678 477" fill="none" stroke="#828282" stroke-width="3.6" stroke-linejoin="miter" stroke-linecap="square"/>
<path d="M474 837 L1038 837" fill="none" stroke="#828282" stroke-width="3.6" stroke-linejoin="miter" stroke-linecap="square"/>
<path d="M1002 1077 L1002 897" fill="none" stroke="#828282" stroke-width="3.6" stroke-linejoin="miter" stroke-linecap="square"/>
<path d="M990 897 L990 933 L1026 933 L1026 777 L1038 777" fill="none" stroke="#828282" stroke-width="3.6" stroke-linejoin="miter" stroke-linecap="square"/>
<path d="M462 537 L606 537 L606 333 L678 333" fill="none" stroke="#000" stroke-width="4.8" stroke-linejoin="miter" stroke-linecap="square"/>
<path d="M606 453 L678 453" fill="none" stroke="#000" stroke-width="4.8" stroke-linejoin="miter" stroke-linecap="square"/>
<path d="M750 333 L774 333 L774 393 L846 393" fill="none" stroke="#000" stroke-width="4.8" stroke-linejoin="miter" stroke-linecap="square"/>
<path d="M774 381 L846 381" fill="none" stroke="#000" stroke-width="4.8" stroke-linejoin="miter" stroke-linecap="square"/>
<path d="M750 453 L774 453 L774 405 L846 405" fill="none" stroke="#000" stroke-width="4.8" stroke-linejoin="miter" stroke-linecap="square"/>
<path d="M774 417 L846 417" fill="none" stroke="#000" stroke-width="4.8" stroke-linejoin="miter" stroke-linecap="square"/>
<path d="M894 405 L966 405" fill="none" stroke="#000" stroke-width="4.8" stroke-linejoin="miter" stroke-linecap="square"/>
<path d="M966 417 L930 417 L930 717" fill="none" stroke="#000" stroke-width="4.8" stroke-linejoin="miter" stroke-linecap="square"/>
<path d="M870 429 L870 717 L1314 717 L1314 489 L1338 489 L1338 405 L1314 405" fill="none" stroke="#000" stroke-width="4.8" stroke-linejoin="miter" stroke-linecap="square"/>
<path d="M1314 717 L1314 873 L1254 873" fill="none" stroke="#000" stroke-width="4.8" stroke-linejoin="miter" stroke-linecap="square"/>
<path d="M1278 489 L1290 489 L1290 429" fill="none" stroke="#000" stroke-width="4.8" stroke-linejoin="miter" stroke-linecap="square"/>
<path d="M1230 321 L1230 345 L1266 345 L1266 381" fill="none" stroke="#000" stroke-width="4.8" stroke-linejoin="miter" stroke-linecap="square"/>
<path d="M1266 321 L1266 333 L1278 333 L1278 381" fill="none" stroke="#000" stroke-width="4.8" stroke-linejoin="miter" stroke-linecap="square"/>
<path d="M1302 321 L1302 333 L1290 333 L1290 381" fill="none" stroke="#000" stroke-width="4.8" stroke-linejoin="miter" stroke-linecap="square"/>
<path d="M1338 321 L1338 345 L1302 345 L1302 381" fill="none" stroke="#000" stroke-width="4.8" stroke-linejoin="miter" stroke-linecap="square"/>
<path d="M1014 873 L1038 873" fill="none" stroke="#000" stroke-width="4.8" stroke-linejoin="miter" stroke-linecap="square"/>
<circle cx="569.4" cy="440.4" r="5.6" fill="#3c7510"/>
<circle cx="785.4" cy="608.4" r="5.6" fill="#3c7510"/>
<circle cx="785.4" cy="764.4" r="5.6" fill="#3c7510"/>
<circle cx="941.4" cy="908.4" r="5.6" fill="#3c7510"/>
<circle cx="941.4" cy="824.4" r="5.6" fill="#3c7510"/>
<circle cx="1001.4" cy="932.4" r="5.6" fill="#828282"/>
<circle cx="605.4" cy="452.4" r="6.6" fill="#000"/>
<circle cx="773.4" cy="380.4" r="6.6" fill="#000"/>
<circle cx="773.4" cy="416.4" r="6.6" fill="#000"/>
<circle cx="929.4" cy="716.4" r="6.6" fill="#000"/>
<circle cx="1313.4" cy="716.4" r="6.6" fill="#000"/>
<path d="M678 333 L690 333" fill="none" stroke="#000" stroke-width="4.8" stroke-linecap="butt"/>
<path d="M738 333 L750 333" fill="none" stroke="#000" stroke-width="4.8" stroke-linecap="butt"/>
<path d="M678 357 L690 357" fill="none" stroke="#000" stroke-width="2.4" stroke-linecap="butt"/>
<path d="M678 381 L690 381" fill="none" stroke="#000" stroke-width="2.4" stroke-linecap="butt"/>
<path d="M696 393 V399 H744 V327 H738 M702 399 V405 H750 V333 H744" fill="none" stroke="#000" stroke-width="2.4"/>
<rect x="690" y="321" width="48" height="72" fill="none" stroke="#000" stroke-width="2.4"/>
<path d="M714 393 L714 405" fill="none" stroke="#000" stroke-width="2.4" stroke-linecap="butt"/>
<path d="M690 375.5 L699 381 L690 386.5" fill="none" stroke="#000" stroke-width="2.4" stroke-linejoin="miter"/>
<text x="699.8" y="339.5" font-size="16" text-anchor="middle" fill="#000" font-family="Liberation Sans,DejaVu Sans,sans-serif" >D</text>
<text x="727.4" y="339.5" font-size="16" text-anchor="middle" fill="#000" font-family="Liberation Sans,DejaVu Sans,sans-serif" >Q</text>
<text x="704.3" y="363" font-size="16" text-anchor="middle" fill="#000" font-family="Liberation Sans,DejaVu Sans,sans-serif" textLength="23" lengthAdjust="spacingAndGlyphs" >WE</text>
<text x="714.3" y="387.5" font-size="16" text-anchor="middle" fill="#8e8b86" font-family="Liberation Sans,DejaVu Sans,sans-serif" >R</text>
<rect x="703" y="298.2" width="22" height="18.8" fill="#c9c7c3"/>
<text x="714" y="315.8" font-size="16" text-anchor="middle" fill="#3a3a3a" font-family="Liberation Sans,DejaVu Sans,sans-serif" textLength="17" lengthAdjust="spacingAndGlyphs" >00</text>
<circle cx="677.4" cy="332.4" r="5.7" fill="#000"/>
<circle cx="749.4" cy="332.4" r="5.7" fill="#000"/>
<path d="M678 453 L690 453" fill="none" stroke="#000" stroke-width="4.8" stroke-linecap="butt"/>
<path d="M738 453 L750 453" fill="none" stroke="#000" stroke-width="4.8" stroke-linecap="butt"/>
<path d="M678 477 L690 477" fill="none" stroke="#000" stroke-width="2.4" stroke-linecap="butt"/>
<path d="M678 501 L690 501" fill="none" stroke="#000" stroke-width="2.4" stroke-linecap="butt"/>
<path d="M696 513 V519 H744 V447 H738 M702 519 V525 H750 V453 H744" fill="none" stroke="#000" stroke-width="2.4"/>
<rect x="690" y="441" width="48" height="72" fill="none" stroke="#000" stroke-width="2.4"/>
<path d="M714 513 L714 525" fill="none" stroke="#000" stroke-width="2.4" stroke-linecap="butt"/>
<path d="M690 495.5 L699 501 L690 506.5" fill="none" stroke="#000" stroke-width="2.4" stroke-linejoin="miter"/>
<text x="699.8" y="459.5" font-size="16" text-anchor="middle" fill="#000" font-family="Liberation Sans,DejaVu Sans,sans-serif" >D</text>
<text x="727.4" y="459.5" font-size="16" text-anchor="middle" fill="#000" font-family="Liberation Sans,DejaVu Sans,sans-serif" >Q</text>
<text x="704.3" y="483" font-size="16" text-anchor="middle" fill="#000" font-family="Liberation Sans,DejaVu Sans,sans-serif" textLength="23" lengthAdjust="spacingAndGlyphs" >WE</text>
<text x="714.3" y="507.5" font-size="16" text-anchor="middle" fill="#8e8b86" font-family="Liberation Sans,DejaVu Sans,sans-serif" >R</text>
<rect x="703" y="418.2" width="22" height="18.8" fill="#c9c7c3"/>
<text x="714" y="435.8" font-size="16" text-anchor="middle" fill="#3a3a3a" font-family="Liberation Sans,DejaVu Sans,sans-serif" textLength="17" lengthAdjust="spacingAndGlyphs" >00</text>
<circle cx="677.4" cy="452.4" r="5.7" fill="#000"/>
<circle cx="749.4" cy="452.4" r="5.7" fill="#000"/>
<circle cx="677.4" cy="356.4" r="5.7" fill="#3c7510"/>
<circle cx="677.4" cy="380.4" r="5.7" fill="#3c7510"/>
<circle cx="713.4" cy="404.4" r="5.7" fill="#3c7510"/>
<circle cx="677.4" cy="476.4" r="5.7" fill="#828282"/>
<circle cx="677.4" cy="500.4" r="5.7" fill="#3c7510"/>
<circle cx="713.4" cy="524.4" r="5.7" fill="#3c7510"/>
<text x="714.5" y="288.5" font-size="19" text-anchor="middle" fill="#0303ec" font-family="DejaVu Sans Condensed,DejaVu Sans,Liberation Sans,sans-serif" font-weight="bold" textLength="80" lengthAdjust="spacingAndGlyphs" >LSB_BUF</text>
<text x="714.5" y="548.5" font-size="19" text-anchor="middle" fill="#0303ec" font-family="DejaVu Sans Condensed,DejaVu Sans,Liberation Sans,sans-serif" font-weight="bold" textLength="87" lengthAdjust="spacingAndGlyphs" >MSB_BUF</text>
<g transform="translate(-0.25 -0.25)">
<path d="M846 369 L894 393 L894 417 L846 441 Z" fill="none" stroke="#000" stroke-width="2.4" stroke-linejoin="miter"/>
<text x="870.5" y="415" font-size="16" text-anchor="middle" fill="#000" font-family="Liberation Sans,DejaVu Sans,sans-serif" textLength="34.5" lengthAdjust="spacingAndGlyphs" >MUX</text>
<text x="855" y="386" font-size="12" text-anchor="middle" fill="#9a9791" font-family="Liberation Sans,DejaVu Sans,sans-serif" >0</text>
<path d="M866 424 L870 418 L874 424 Z" fill="#d8d6d2"/>
<circle cx="845.65" cy="380.65" r="5.7" fill="#000"/>
<circle cx="845.65" cy="392.65" r="5.7" fill="#000"/>
<circle cx="845.65" cy="404.65" r="5.7" fill="#000"/>
<circle cx="845.65" cy="416.65" r="5.7" fill="#000"/>
<circle cx="893.65" cy="404.65" r="5.7" fill="#000"/>
<circle cx="869.65" cy="428.65" r="5.7" fill="#000"/>
</g>
<path d="M966 405 H983.5 V418 L990 429" fill="none" stroke="#000" stroke-width="4.8" stroke-linejoin="round"/>
<path d="M966 417 L981 417" fill="none" stroke="#000" stroke-width="1.4" stroke-linecap="butt"/>
<text x="968.5" y="414.3" font-size="7.5" text-anchor="start" fill="#000" font-family="Liberation Sans,DejaVu Sans,sans-serif" textLength="11.5" lengthAdjust="spacingAndGlyphs" >7-0</text>
<text x="968.5" y="426.7" font-size="7.5" text-anchor="start" fill="#000" font-family="Liberation Sans,DejaVu Sans,sans-serif" textLength="11.5" lengthAdjust="spacingAndGlyphs" >9-8</text>
<circle cx="965.4" cy="404.4" r="5.7" fill="#000"/>
<circle cx="965.4" cy="416.4" r="5.7" fill="#000"/>
<circle cx="989.4" cy="428.4" r="5.7" fill="#000"/>
<path d="M990 429 L996.5 436.5 V460.5" fill="none" stroke="#000" stroke-width="4.8" stroke-linejoin="round"/>
<path d="M996.5 435.5 L1002.5 441 H1014 M996.5 460 L1002.5 465.5 H1014" fill="none" stroke="#000" stroke-width="2.4"/>
<path d="M1008.5 442.5 L1008.5 465" fill="none" stroke="#000" stroke-width="2.4" stroke-linecap="butt" stroke-dasharray="3.6 2.4"/>
<path d="M1026 489 V477 H1014 V417 H1254 V477 H1242 V489" fill="none" stroke="#000" stroke-width="2.4"/>
<rect x="1014" y="489" width="240" height="192" fill="none" stroke="#000" stroke-width="2.4"/>
<text x="1133" y="408.5" font-size="19" text-anchor="middle" fill="#000" font-family="DejaVu Sans Condensed,DejaVu Sans,Liberation Sans,sans-serif" font-weight="bold" textLength="79" lengthAdjust="spacingAndGlyphs" >EEPROM</text>
<text x="1135" y="433" font-size="16" text-anchor="middle" fill="#000" font-family="DejaVu Sans,Liberation Sans,sans-serif" textLength="86" lengthAdjust="spacingAndGlyphs" >ROM 1K x 8</text>
<text x="1020" y="450.3" font-size="15" text-anchor="middle" fill="#000" font-family="DejaVu Sans,Liberation Sans,sans-serif" textLength="8.6" lengthAdjust="spacingAndGlyphs" >0</text>
<text x="1020" y="474.3" font-size="15" text-anchor="middle" fill="#000" font-family="DejaVu Sans,Liberation Sans,sans-serif" textLength="8.6" lengthAdjust="spacingAndGlyphs" >9</text>
<path d="M1038 435.5 L1044.5 441.5 V448 L1048 453.5 L1044.5 459 V465.5 L1038 471.5" fill="none" stroke="#000" stroke-width="1.3"/>
<text x="1054.8" y="462.5" font-size="16" text-anchor="middle" fill="#000" font-family="Liberation Sans,DejaVu Sans,sans-serif" >A</text>
<text x="1079.8" y="446.5" font-size="15" text-anchor="middle" fill="#000" font-family="DejaVu Sans,Liberation Sans,sans-serif" textLength="8.6" lengthAdjust="spacingAndGlyphs" >0</text>
<path d="M1062 453.2 L1099 453.2" fill="none" stroke="#000" stroke-width="1.3" stroke-linecap="butt"/>
<text x="1080.5" y="471.5" font-size="15" text-anchor="middle" fill="#000" font-family="DejaVu Sans,Liberation Sans,sans-serif" textLength="35" lengthAdjust="spacingAndGlyphs" >1023</text>
<rect x="1051" y="495.5" width="166" height="177" fill="#cdcdcd"/>
<rect x="1087" y="495.5" width="130" height="177" fill="none" stroke="#6e6e6e" stroke-width="0.9"/>
<rect x="1085.5" y="495.5" width="23" height="25" fill="#474747"/>
<path d="M1014 513 L1051 513" fill="none" stroke="#000" stroke-width="2.4" stroke-linecap="butt"/>
<path d="M1217 513 L1254 513" fill="none" stroke="#000" stroke-width="2.4" stroke-linecap="butt"/>
<text x="1069" y="516.5" font-size="15.5" text-anchor="middle" fill="#111" font-family="DejaVu Sans,Liberation Sans,sans-serif" textLength="26.5" lengthAdjust="spacingAndGlyphs" >000</text>
<text x="1096.8" y="516.5" font-size="15.5" text-anchor="middle" fill="#fcfcfc" font-family="DejaVu Sans,Liberation Sans,sans-serif" >3f</text>
<text x="1118.55" y="516.5" font-size="15.5" text-anchor="middle" fill="#111" font-family="DejaVu Sans,Liberation Sans,sans-serif" textLength="16.5" lengthAdjust="spacingAndGlyphs" >0c</text>
<text x="1140.3" y="516.5" font-size="15.5" text-anchor="middle" fill="#111" font-family="DejaVu Sans,Liberation Sans,sans-serif" textLength="16.5" lengthAdjust="spacingAndGlyphs" >5b</text>
<text x="1162.05" y="516.5" font-size="15.5" text-anchor="middle" fill="#111" font-family="DejaVu Sans,Liberation Sans,sans-serif" textLength="16.5" lengthAdjust="spacingAndGlyphs" >5e</text>
<text x="1183.8" y="516.5" font-size="15.5" text-anchor="middle" fill="#111" font-family="DejaVu Sans,Liberation Sans,sans-serif" textLength="16.5" lengthAdjust="spacingAndGlyphs" >6c</text>
<text x="1205.55" y="516.5" font-size="15.5" text-anchor="middle" fill="#111" font-family="DejaVu Sans,Liberation Sans,sans-serif" textLength="16.5" lengthAdjust="spacingAndGlyphs" >76</text>
<path d="M1014 537 L1051 537" fill="none" stroke="#000" stroke-width="2.4" stroke-linecap="butt"/>
<path d="M1217 537 L1254 537" fill="none" stroke="#000" stroke-width="2.4" stroke-linecap="butt"/>
<text x="1069" y="541.65" font-size="15.5" text-anchor="middle" fill="#111" font-family="DejaVu Sans,Liberation Sans,sans-serif" textLength="26.5" lengthAdjust="spacingAndGlyphs" >006</text>
<text x="1096.8" y="541.65" font-size="15.5" text-anchor="middle" fill="#111" font-family="DejaVu Sans,Liberation Sans,sans-serif" textLength="16.5" lengthAdjust="spacingAndGlyphs" >77</text>
<text x="1118.55" y="541.65" font-size="15.5" text-anchor="middle" fill="#111" font-family="DejaVu Sans,Liberation Sans,sans-serif" >1c</text>
<text x="1140.3" y="541.65" font-size="15.5" text-anchor="middle" fill="#111" font-family="DejaVu Sans,Liberation Sans,sans-serif" >7f</text>
<text x="1162.05" y="541.65" font-size="15.5" text-anchor="middle" fill="#111" font-family="DejaVu Sans,Liberation Sans,sans-serif" textLength="16.5" lengthAdjust="spacingAndGlyphs" >7e</text>
<text x="1183.8" y="541.65" font-size="15.5" text-anchor="middle" fill="#111" font-family="DejaVu Sans,Liberation Sans,sans-serif" textLength="16.5" lengthAdjust="spacingAndGlyphs" >7d</text>
<text x="1205.55" y="541.65" font-size="15.5" text-anchor="middle" fill="#111" font-family="DejaVu Sans,Liberation Sans,sans-serif" textLength="16.5" lengthAdjust="spacingAndGlyphs" >67</text>
<path d="M1014 561 L1051 561" fill="none" stroke="#000" stroke-width="2.4" stroke-linecap="butt"/>
<path d="M1217 561 L1254 561" fill="none" stroke="#000" stroke-width="2.4" stroke-linecap="butt"/>
<text x="1069" y="566.8" font-size="15.5" text-anchor="middle" fill="#111" font-family="DejaVu Sans,Liberation Sans,sans-serif" textLength="26.5" lengthAdjust="spacingAndGlyphs" >00c</text>
<text x="1096.8" y="566.8" font-size="15.5" text-anchor="middle" fill="#111" font-family="DejaVu Sans,Liberation Sans,sans-serif" textLength="16.5" lengthAdjust="spacingAndGlyphs" >33</text>
<text x="1118.55" y="566.8" font-size="15.5" text-anchor="middle" fill="#111" font-family="DejaVu Sans,Liberation Sans,sans-serif" >4f</text>
<text x="1140.3" y="566.8" font-size="15.5" text-anchor="middle" fill="#111" font-family="DejaVu Sans,Liberation Sans,sans-serif" textLength="16.5" lengthAdjust="spacingAndGlyphs" >73</text>
<text x="1162.05" y="566.8" font-size="15.5" text-anchor="middle" fill="#111" font-family="DejaVu Sans,Liberation Sans,sans-serif" >71</text>
<text x="1183.8" y="566.8" font-size="15.5" text-anchor="middle" fill="#111" font-family="DejaVu Sans,Liberation Sans,sans-serif" >3f</text>
<text x="1205.55" y="566.8" font-size="15.5" text-anchor="middle" fill="#111" font-family="DejaVu Sans,Liberation Sans,sans-serif" textLength="16.5" lengthAdjust="spacingAndGlyphs" >0c</text>
<path d="M1014 585 L1051 585" fill="none" stroke="#000" stroke-width="2.4" stroke-linecap="butt"/>
<path d="M1217 585 L1254 585" fill="none" stroke="#000" stroke-width="2.4" stroke-linecap="butt"/>
<text x="1069" y="591.95" font-size="15.5" text-anchor="middle" fill="#111" font-family="DejaVu Sans,Liberation Sans,sans-serif" textLength="26.5" lengthAdjust="spacingAndGlyphs" >012</text>
<text x="1096.8" y="591.95" font-size="15.5" text-anchor="middle" fill="#111" font-family="DejaVu Sans,Liberation Sans,sans-serif" textLength="16.5" lengthAdjust="spacingAndGlyphs" >5b</text>
<text x="1118.55" y="591.95" font-size="15.5" text-anchor="middle" fill="#111" font-family="DejaVu Sans,Liberation Sans,sans-serif" textLength="16.5" lengthAdjust="spacingAndGlyphs" >5e</text>
<text x="1140.3" y="591.95" font-size="15.5" text-anchor="middle" fill="#111" font-family="DejaVu Sans,Liberation Sans,sans-serif" textLength="16.5" lengthAdjust="spacingAndGlyphs" >6c</text>
<text x="1162.05" y="591.95" font-size="15.5" text-anchor="middle" fill="#111" font-family="DejaVu Sans,Liberation Sans,sans-serif" textLength="16.5" lengthAdjust="spacingAndGlyphs" >76</text>
<text x="1183.8" y="591.95" font-size="15.5" text-anchor="middle" fill="#111" font-family="DejaVu Sans,Liberation Sans,sans-serif" textLength="16.5" lengthAdjust="spacingAndGlyphs" >77</text>
<text x="1205.55" y="591.95" font-size="15.5" text-anchor="middle" fill="#111" font-family="DejaVu Sans,Liberation Sans,sans-serif" >1c</text>
<path d="M1014 609 L1051 609" fill="none" stroke="#000" stroke-width="2.4" stroke-linecap="butt"/>
<path d="M1217 609 L1254 609" fill="none" stroke="#000" stroke-width="2.4" stroke-linecap="butt"/>
<text x="1069" y="617.1" font-size="15.5" text-anchor="middle" fill="#111" font-family="DejaVu Sans,Liberation Sans,sans-serif" textLength="26.5" lengthAdjust="spacingAndGlyphs" >018</text>
<text x="1096.8" y="617.1" font-size="15.5" text-anchor="middle" fill="#111" font-family="DejaVu Sans,Liberation Sans,sans-serif" >7f</text>
<text x="1118.55" y="617.1" font-size="15.5" text-anchor="middle" fill="#111" font-family="DejaVu Sans,Liberation Sans,sans-serif" textLength="16.5" lengthAdjust="spacingAndGlyphs" >7e</text>
<text x="1140.3" y="617.1" font-size="15.5" text-anchor="middle" fill="#111" font-family="DejaVu Sans,Liberation Sans,sans-serif" textLength="16.5" lengthAdjust="spacingAndGlyphs" >7d</text>
<text x="1162.05" y="617.1" font-size="15.5" text-anchor="middle" fill="#111" font-family="DejaVu Sans,Liberation Sans,sans-serif" textLength="16.5" lengthAdjust="spacingAndGlyphs" >67</text>
<text x="1183.8" y="617.1" font-size="15.5" text-anchor="middle" fill="#111" font-family="DejaVu Sans,Liberation Sans,sans-serif" textLength="16.5" lengthAdjust="spacingAndGlyphs" >33</text>
<text x="1205.55" y="617.1" font-size="15.5" text-anchor="middle" fill="#111" font-family="DejaVu Sans,Liberation Sans,sans-serif" >4f</text>
<path d="M1014 633 L1051 633" fill="none" stroke="#000" stroke-width="2.4" stroke-linecap="butt"/>
<path d="M1217 633 L1254 633" fill="none" stroke="#000" stroke-width="2.4" stroke-linecap="butt"/>
<text x="1069" y="642.25" font-size="15.5" text-anchor="middle" fill="#111" font-family="DejaVu Sans,Liberation Sans,sans-serif" textLength="26.5" lengthAdjust="spacingAndGlyphs" >01e</text>
<text x="1096.8" y="642.25" font-size="15.5" text-anchor="middle" fill="#111" font-family="DejaVu Sans,Liberation Sans,sans-serif" textLength="16.5" lengthAdjust="spacingAndGlyphs" >73</text>
<text x="1118.55" y="642.25" font-size="15.5" text-anchor="middle" fill="#111" font-family="DejaVu Sans,Liberation Sans,sans-serif" >71</text>
<text x="1140.3" y="642.25" font-size="15.5" text-anchor="middle" fill="#111" font-family="DejaVu Sans,Liberation Sans,sans-serif" >3f</text>
<text x="1162.05" y="642.25" font-size="15.5" text-anchor="middle" fill="#111" font-family="DejaVu Sans,Liberation Sans,sans-serif" textLength="16.5" lengthAdjust="spacingAndGlyphs" >0c</text>
<text x="1183.8" y="642.25" font-size="15.5" text-anchor="middle" fill="#111" font-family="DejaVu Sans,Liberation Sans,sans-serif" textLength="16.5" lengthAdjust="spacingAndGlyphs" >5b</text>
<text x="1205.55" y="642.25" font-size="15.5" text-anchor="middle" fill="#111" font-family="DejaVu Sans,Liberation Sans,sans-serif" textLength="16.5" lengthAdjust="spacingAndGlyphs" >5e</text>
<path d="M1014 657 L1051 657" fill="none" stroke="#000" stroke-width="2.4" stroke-linecap="butt"/>
<path d="M1217 657 L1254 657" fill="none" stroke="#000" stroke-width="2.4" stroke-linecap="butt"/>
<text x="1069" y="667.4" font-size="15.5" text-anchor="middle" fill="#111" font-family="DejaVu Sans,Liberation Sans,sans-serif" textLength="26.5" lengthAdjust="spacingAndGlyphs" >024</text>
<text x="1096.8" y="667.4" font-size="15.5" text-anchor="middle" fill="#111" font-family="DejaVu Sans,Liberation Sans,sans-serif" textLength="16.5" lengthAdjust="spacingAndGlyphs" >6c</text>
<text x="1118.55" y="667.4" font-size="15.5" text-anchor="middle" fill="#111" font-family="DejaVu Sans,Liberation Sans,sans-serif" textLength="16.5" lengthAdjust="spacingAndGlyphs" >76</text>
<text x="1140.3" y="667.4" font-size="15.5" text-anchor="middle" fill="#111" font-family="DejaVu Sans,Liberation Sans,sans-serif" textLength="16.5" lengthAdjust="spacingAndGlyphs" >77</text>
<text x="1162.05" y="667.4" font-size="15.5" text-anchor="middle" fill="#111" font-family="DejaVu Sans,Liberation Sans,sans-serif" >1c</text>
<text x="1183.8" y="667.4" font-size="15.5" text-anchor="middle" fill="#111" font-family="DejaVu Sans,Liberation Sans,sans-serif" >7f</text>
<text x="1205.55" y="667.4" font-size="15.5" text-anchor="middle" fill="#111" font-family="DejaVu Sans,Liberation Sans,sans-serif" textLength="16.5" lengthAdjust="spacingAndGlyphs" >7e</text>
<path d="M1278 489 L1272.5 494 V665" fill="none" stroke="#000" stroke-width="4.4" stroke-linejoin="round"/>
<path d="M1254 501 H1266 L1271.5 496" fill="none" stroke="#000" stroke-width="2.4"/>
<text x="1247.5" y="505.8" font-size="10.5" text-anchor="middle" fill="#111" font-family="Liberation Sans,DejaVu Sans,sans-serif" >A</text>
<text x="1260" y="496.5" font-size="8.5" text-anchor="middle" fill="#111" font-family="Liberation Sans,DejaVu Sans,sans-serif" >0</text>
<path d="M1254 525 H1266 L1271.5 520" fill="none" stroke="#000" stroke-width="2.4"/>
<text x="1247.5" y="529.8" font-size="10.5" text-anchor="middle" fill="#111" font-family="Liberation Sans,DejaVu Sans,sans-serif" >A</text>
<text x="1260" y="520.5" font-size="8.5" text-anchor="middle" fill="#111" font-family="Liberation Sans,DejaVu Sans,sans-serif" >1</text>
<path d="M1254 549 H1266 L1271.5 544" fill="none" stroke="#000" stroke-width="2.4"/>
<text x="1247.5" y="553.8" font-size="10.5" text-anchor="middle" fill="#111" font-family="Liberation Sans,DejaVu Sans,sans-serif" >A</text>
<text x="1260" y="544.5" font-size="8.5" text-anchor="middle" fill="#111" font-family="Liberation Sans,DejaVu Sans,sans-serif" >2</text>
<path d="M1254 573 H1266 L1271.5 568" fill="none" stroke="#000" stroke-width="2.4"/>
<text x="1247.5" y="577.8" font-size="10.5" text-anchor="middle" fill="#111" font-family="Liberation Sans,DejaVu Sans,sans-serif" >A</text>
<text x="1260" y="568.5" font-size="8.5" text-anchor="middle" fill="#111" font-family="Liberation Sans,DejaVu Sans,sans-serif" >3</text>
<path d="M1254 597 H1266 L1271.5 592" fill="none" stroke="#000" stroke-width="2.4"/>
<text x="1247.5" y="601.8" font-size="10.5" text-anchor="middle" fill="#111" font-family="Liberation Sans,DejaVu Sans,sans-serif" >A</text>
<text x="1260" y="592.5" font-size="8.5" text-anchor="middle" fill="#111" font-family="Liberation Sans,DejaVu Sans,sans-serif" >4</text>
<path d="M1254 621 H1266 L1271.5 616" fill="none" stroke="#000" stroke-width="2.4"/>
<text x="1247.5" y="625.8" font-size="10.5" text-anchor="middle" fill="#111" font-family="Liberation Sans,DejaVu Sans,sans-serif" >A</text>
<text x="1260" y="616.5" font-size="8.5" text-anchor="middle" fill="#111" font-family="Liberation Sans,DejaVu Sans,sans-serif" >5</text>
<path d="M1254 645 H1266 L1271.5 640" fill="none" stroke="#000" stroke-width="2.4"/>
<text x="1247.5" y="649.8" font-size="10.5" text-anchor="middle" fill="#111" font-family="Liberation Sans,DejaVu Sans,sans-serif" >A</text>
<text x="1260" y="640.5" font-size="8.5" text-anchor="middle" fill="#111" font-family="Liberation Sans,DejaVu Sans,sans-serif" >6</text>
<path d="M1254 669 H1266 L1271.5 664" fill="none" stroke="#000" stroke-width="2.4"/>
<text x="1247.5" y="673.8" font-size="10.5" text-anchor="middle" fill="#111" font-family="Liberation Sans,DejaVu Sans,sans-serif" >A</text>
<text x="1260" y="664.5" font-size="8.5" text-anchor="middle" fill="#111" font-family="Liberation Sans,DejaVu Sans,sans-serif" >7</text>
<circle cx="1277.4" cy="488.4" r="5.7" fill="#000"/>
<g transform="translate(-0.25 -0.25)">
<path d="M1254 381 L1326 381 L1302 429 L1278 429 Z" fill="none" stroke="#000" stroke-width="2.4" stroke-linejoin="miter"/>
<text x="1290" y="414.5" font-size="16" text-anchor="middle" fill="#000" font-family="Liberation Sans,DejaVu Sans,sans-serif" textLength="34.5" lengthAdjust="spacingAndGlyphs" >DMX</text>
<text x="1266" y="397" font-size="12" text-anchor="middle" fill="#9a9791" font-family="Liberation Sans,DejaVu Sans,sans-serif" >0</text>
<circle cx="1265.65" cy="380.65" r="5.7" fill="#000"/>
<circle cx="1277.65" cy="380.65" r="5.7" fill="#000"/>
<circle cx="1289.65" cy="380.65" r="5.7" fill="#000"/>
<circle cx="1301.65" cy="380.65" r="5.7" fill="#000"/>
<circle cx="1313.65" cy="404.65" r="5.7" fill="#000"/>
<circle cx="1289.65" cy="428.65" r="5.7" fill="#000"/>
</g>
<g transform="translate(-0.65 -0.6)">
<path d="M1219.5 316 L1219.5 201.5 L1230 190.5 L1240.5 201.5 L1240.5 316 Z" fill="none" stroke="#000" stroke-width="2.4" stroke-linejoin="miter"/>
<g transform="translate(1230.5 213) rotate(90)"><text x="0" y="5.2" font-size="14.4" text-anchor="middle" fill="#000" font-family="DejaVu Sans Mono,Liberation Mono,monospace">0</text><path d="M-2.3 3.1 L2.3 -3.1" stroke="#000" stroke-width="1.3" fill="none"/></g>
<g transform="translate(1230.5 225) rotate(90)"><text x="0" y="5.2" font-size="14.4" text-anchor="middle" fill="#000" font-family="DejaVu Sans Mono,Liberation Mono,monospace">0</text><path d="M-2.3 3.1 L2.3 -3.1" stroke="#000" stroke-width="1.3" fill="none"/></g>
<g transform="translate(1230.5 237) rotate(90)"><text x="0" y="5.2" font-size="14.4" text-anchor="middle" fill="#000" font-family="DejaVu Sans Mono,Liberation Mono,monospace">1</text></g>
<g transform="translate(1230.5 249) rotate(90)"><text x="0" y="5.2" font-size="14.4" text-anchor="middle" fill="#000" font-family="DejaVu Sans Mono,Liberation Mono,monospace">1</text></g>
<g transform="translate(1230.5 261) rotate(90)"><text x="0" y="5.2" font-size="14.4" text-anchor="middle" fill="#000" font-family="DejaVu Sans Mono,Liberation Mono,monospace">1</text></g>
<g transform="translate(1230.5 273) rotate(90)"><text x="0" y="5.2" font-size="14.4" text-anchor="middle" fill="#000" font-family="DejaVu Sans Mono,Liberation Mono,monospace">1</text></g>
<g transform="translate(1230.5 285) rotate(90)"><text x="0" y="5.2" font-size="14.4" text-anchor="middle" fill="#000" font-family="DejaVu Sans Mono,Liberation Mono,monospace">1</text></g>
<g transform="translate(1230.5 297) rotate(90)"><text x="0" y="5.2" font-size="14.4" text-anchor="middle" fill="#000" font-family="DejaVu Sans Mono,Liberation Mono,monospace">1</text></g>
<text x="1223.5" y="307" font-size="10.5" text-anchor="middle" fill="#1c1cb4" font-family="Liberation Sans,DejaVu Sans,sans-serif" transform="rotate(90 1223.5 307)" dy="3.5">b</text>
<text x="1230" y="180" font-size="19" text-anchor="middle" fill="#0303ec" font-family="DejaVu Sans Condensed,DejaVu Sans,Liberation Sans,sans-serif" font-weight="bold" textLength="25" lengthAdjust="spacingAndGlyphs" >O0</text>
</g>
<circle cx="1229.4" cy="320.4" r="5.7" fill="#000"/>
<g transform="translate(-0.65 -0.6)">
<path d="M1255.5 316 L1255.5 201.5 L1266 190.5 L1276.5 201.5 L1276.5 316 Z" fill="none" stroke="#000" stroke-width="2.4" stroke-linejoin="miter"/>
<g transform="translate(1266.5 213) rotate(90)"><text x="0" y="5.2" font-size="14.4" text-anchor="middle" fill="#000" font-family="DejaVu Sans Mono,Liberation Mono,monospace">0</text><path d="M-2.3 3.1 L2.3 -3.1" stroke="#000" stroke-width="1.3" fill="none"/></g>
<g transform="translate(1266.5 225) rotate(90)"><text x="0" y="5.2" font-size="14.4" text-anchor="middle" fill="#000" font-family="DejaVu Sans Mono,Liberation Mono,monospace">0</text><path d="M-2.3 3.1 L2.3 -3.1" stroke="#000" stroke-width="1.3" fill="none"/></g>
<g transform="translate(1266.5 237) rotate(90)"><text x="0" y="5.2" font-size="14.4" text-anchor="middle" fill="#000" font-family="DejaVu Sans Mono,Liberation Mono,monospace">0</text><path d="M-2.3 3.1 L2.3 -3.1" stroke="#000" stroke-width="1.3" fill="none"/></g>
<g transform="translate(1266.5 249) rotate(90)"><text x="0" y="5.2" font-size="14.4" text-anchor="middle" fill="#000" font-family="DejaVu Sans Mono,Liberation Mono,monospace">0</text><path d="M-2.3 3.1 L2.3 -3.1" stroke="#000" stroke-width="1.3" fill="none"/></g>
<g transform="translate(1266.5 261) rotate(90)"><text x="0" y="5.2" font-size="14.4" text-anchor="middle" fill="#000" font-family="DejaVu Sans Mono,Liberation Mono,monospace">0</text><path d="M-2.3 3.1 L2.3 -3.1" stroke="#000" stroke-width="1.3" fill="none"/></g>
<g transform="translate(1266.5 273) rotate(90)"><text x="0" y="5.2" font-size="14.4" text-anchor="middle" fill="#000" font-family="DejaVu Sans Mono,Liberation Mono,monospace">0</text><path d="M-2.3 3.1 L2.3 -3.1" stroke="#000" stroke-width="1.3" fill="none"/></g>
<g transform="translate(1266.5 285) rotate(90)"><text x="0" y="5.2" font-size="14.4" text-anchor="middle" fill="#000" font-family="DejaVu Sans Mono,Liberation Mono,monospace">0</text><path d="M-2.3 3.1 L2.3 -3.1" stroke="#000" stroke-width="1.3" fill="none"/></g>
<g transform="translate(1266.5 297) rotate(90)"><text x="0" y="5.2" font-size="14.4" text-anchor="middle" fill="#000" font-family="DejaVu Sans Mono,Liberation Mono,monospace">0</text><path d="M-2.3 3.1 L2.3 -3.1" stroke="#000" stroke-width="1.3" fill="none"/></g>
<text x="1259.5" y="307" font-size="10.5" text-anchor="middle" fill="#1c1cb4" font-family="Liberation Sans,DejaVu Sans,sans-serif" transform="rotate(90 1259.5 307)" dy="3.5">b</text>
<text x="1266" y="180" font-size="19" text-anchor="middle" fill="#0303ec" font-family="DejaVu Sans Condensed,DejaVu Sans,Liberation Sans,sans-serif" font-weight="bold" textLength="25" lengthAdjust="spacingAndGlyphs" >O1</text>
</g>
<circle cx="1265.4" cy="320.4" r="5.7" fill="#000"/>
<g transform="translate(-0.65 -0.6)">
<path d="M1291.5 316 L1291.5 201.5 L1302 190.5 L1312.5 201.5 L1312.5 316 Z" fill="none" stroke="#000" stroke-width="2.4" stroke-linejoin="miter"/>
<g transform="translate(1302.5 213) rotate(90)"><text x="0" y="5.2" font-size="14.4" text-anchor="middle" fill="#000" font-family="DejaVu Sans Mono,Liberation Mono,monospace">0</text><path d="M-2.3 3.1 L2.3 -3.1" stroke="#000" stroke-width="1.3" fill="none"/></g>
<g transform="translate(1302.5 225) rotate(90)"><text x="0" y="5.2" font-size="14.4" text-anchor="middle" fill="#000" font-family="DejaVu Sans Mono,Liberation Mono,monospace">0</text><path d="M-2.3 3.1 L2.3 -3.1" stroke="#000" stroke-width="1.3" fill="none"/></g>
<g transform="translate(1302.5 237) rotate(90)"><text x="0" y="5.2" font-size="14.4" text-anchor="middle" fill="#000" font-family="DejaVu Sans Mono,Liberation Mono,monospace">0</text><path d="M-2.3 3.1 L2.3 -3.1" stroke="#000" stroke-width="1.3" fill="none"/></g>
<g transform="translate(1302.5 249) rotate(90)"><text x="0" y="5.2" font-size="14.4" text-anchor="middle" fill="#000" font-family="DejaVu Sans Mono,Liberation Mono,monospace">0</text><path d="M-2.3 3.1 L2.3 -3.1" stroke="#000" stroke-width="1.3" fill="none"/></g>
<g transform="translate(1302.5 261) rotate(90)"><text x="0" y="5.2" font-size="14.4" text-anchor="middle" fill="#000" font-family="DejaVu Sans Mono,Liberation Mono,monospace">0</text><path d="M-2.3 3.1 L2.3 -3.1" stroke="#000" stroke-width="1.3" fill="none"/></g>
<g transform="translate(1302.5 273) rotate(90)"><text x="0" y="5.2" font-size="14.4" text-anchor="middle" fill="#000" font-family="DejaVu Sans Mono,Liberation Mono,monospace">0</text><path d="M-2.3 3.1 L2.3 -3.1" stroke="#000" stroke-width="1.3" fill="none"/></g>
<g transform="translate(1302.5 285) rotate(90)"><text x="0" y="5.2" font-size="14.4" text-anchor="middle" fill="#000" font-family="DejaVu Sans Mono,Liberation Mono,monospace">0</text><path d="M-2.3 3.1 L2.3 -3.1" stroke="#000" stroke-width="1.3" fill="none"/></g>
<g transform="translate(1302.5 297) rotate(90)"><text x="0" y="5.2" font-size="14.4" text-anchor="middle" fill="#000" font-family="DejaVu Sans Mono,Liberation Mono,monospace">0</text><path d="M-2.3 3.1 L2.3 -3.1" stroke="#000" stroke-width="1.3" fill="none"/></g>
<text x="1295.5" y="307" font-size="10.5" text-anchor="middle" fill="#1c1cb4" font-family="Liberation Sans,DejaVu Sans,sans-serif" transform="rotate(90 1295.5 307)" dy="3.5">b</text>
<text x="1302" y="180" font-size="19" text-anchor="middle" fill="#0303ec" font-family="DejaVu Sans Condensed,DejaVu Sans,Liberation Sans,sans-serif" font-weight="bold" textLength="25" lengthAdjust="spacingAndGlyphs" >O2</text>
</g>
<circle cx="1301.4" cy="320.4" r="5.7" fill="#000"/>
<g transform="translate(-0.65 -0.6)">
<path d="M1327.5 316 L1327.5 201.5 L1338 190.5 L1348.5 201.5 L1348.5 316 Z" fill="none" stroke="#000" stroke-width="2.4" stroke-linejoin="miter"/>
<g transform="translate(1338.5 213) rotate(90)"><text x="0" y="5.2" font-size="14.4" text-anchor="middle" fill="#000" font-family="DejaVu Sans Mono,Liberation Mono,monospace">0</text><path d="M-2.3 3.1 L2.3 -3.1" stroke="#000" stroke-width="1.3" fill="none"/></g>
<g transform="translate(1338.5 225) rotate(90)"><text x="0" y="5.2" font-size="14.4" text-anchor="middle" fill="#000" font-family="DejaVu Sans Mono,Liberation Mono,monospace">0</text><path d="M-2.3 3.1 L2.3 -3.1" stroke="#000" stroke-width="1.3" fill="none"/></g>
<g transform="translate(1338.5 237) rotate(90)"><text x="0" y="5.2" font-size="14.4" text-anchor="middle" fill="#000" font-family="DejaVu Sans Mono,Liberation Mono,monospace">0</text><path d="M-2.3 3.1 L2.3 -3.1" stroke="#000" stroke-width="1.3" fill="none"/></g>
<g transform="translate(1338.5 249) rotate(90)"><text x="0" y="5.2" font-size="14.4" text-anchor="middle" fill="#000" font-family="DejaVu Sans Mono,Liberation Mono,monospace">0</text><path d="M-2.3 3.1 L2.3 -3.1" stroke="#000" stroke-width="1.3" fill="none"/></g>
<g transform="translate(1338.5 261) rotate(90)"><text x="0" y="5.2" font-size="14.4" text-anchor="middle" fill="#000" font-family="DejaVu Sans Mono,Liberation Mono,monospace">0</text><path d="M-2.3 3.1 L2.3 -3.1" stroke="#000" stroke-width="1.3" fill="none"/></g>
<g transform="translate(1338.5 273) rotate(90)"><text x="0" y="5.2" font-size="14.4" text-anchor="middle" fill="#000" font-family="DejaVu Sans Mono,Liberation Mono,monospace">0</text><path d="M-2.3 3.1 L2.3 -3.1" stroke="#000" stroke-width="1.3" fill="none"/></g>
<g transform="translate(1338.5 285) rotate(90)"><text x="0" y="5.2" font-size="14.4" text-anchor="middle" fill="#000" font-family="DejaVu Sans Mono,Liberation Mono,monospace">0</text><path d="M-2.3 3.1 L2.3 -3.1" stroke="#000" stroke-width="1.3" fill="none"/></g>
<g transform="translate(1338.5 297) rotate(90)"><text x="0" y="5.2" font-size="14.4" text-anchor="middle" fill="#000" font-family="DejaVu Sans Mono,Liberation Mono,monospace">0</text><path d="M-2.3 3.1 L2.3 -3.1" stroke="#000" stroke-width="1.3" fill="none"/></g>
<text x="1331.5" y="307" font-size="10.5" text-anchor="middle" fill="#1c1cb4" font-family="Liberation Sans,DejaVu Sans,sans-serif" transform="rotate(90 1331.5 307)" dy="3.5">b</text>
<text x="1338" y="180" font-size="19" text-anchor="middle" fill="#0303ec" font-family="DejaVu Sans Condensed,DejaVu Sans,Liberation Sans,sans-serif" font-weight="bold" textLength="25" lengthAdjust="spacingAndGlyphs" >O3</text>
</g>
<circle cx="1337.4" cy="320.4" r="5.7" fill="#000"/>
<g transform="translate(-0.25 -0.25)">
<path d="M630 573 L678 573 L666 609 L642 609 Z" fill="none" stroke="#000" stroke-width="2.4" stroke-linejoin="miter"/>
<text x="654" y="602" font-size="16" text-anchor="middle" fill="#000" font-family="Liberation Sans,DejaVu Sans,sans-serif" textLength="34.5" lengthAdjust="spacingAndGlyphs" >DMX</text>
<text x="642" y="590" font-size="11" text-anchor="middle" fill="#9a9791" font-family="Liberation Sans,DejaVu Sans,sans-serif" >0</text>
<circle cx="668.2" cy="584.8" r="3" fill="#cfcdc8"/>
<circle cx="641.65" cy="572.65" r="5.7" fill="#3c7510"/>
<circle cx="665.65" cy="572.65" r="5.7" fill="#828282"/>
<circle cx="677.65" cy="584.65" r="5.7" fill="#828282"/>
<circle cx="653.65" cy="608.65" r="5.7" fill="#3c7510"/>
<path d="M624 693 V663 A30 30 0 0 1 684 663 V693 Z" fill="none" stroke="#000" stroke-width="2.4"/>
<circle cx="653.65" cy="632.65" r="5.7" fill="#3c7510"/>
<circle cx="629.65" cy="692.65" r="5.7" fill="#3c7510"/>
<circle cx="677.65" cy="692.65" r="5.7" fill="#3c7510"/>
</g>
<g transform="translate(-0.6 -0.65)">
<path d="M415.2 430.5 L444.5 430.5 L455.2 441 L444.5 451.5 L415.2 451.5 Z" fill="none" stroke="#000" stroke-width="2.4" stroke-linejoin="miter"/>
<ellipse cx="432.5" cy="440.2" rx="5.6" ry="8" fill="#3c7510"/>
<g transform="translate(432.5 440.5) rotate(0)"><text x="0" y="5.2" font-size="14.4" text-anchor="middle" fill="#dff5c0" font-family="DejaVu Sans Mono,Liberation Mono,monospace">1</text></g>
<text x="441" y="448.5" font-size="10.5" text-anchor="middle" fill="#1c1cb4" font-family="Liberation Sans,DejaVu Sans,sans-serif" >b</text>
<text x="411" y="452" font-size="19" text-anchor="end" fill="#0303ec" font-family="DejaVu Sans Condensed,DejaVu Sans,Liberation Sans,sans-serif" font-weight="bold" textLength="35" lengthAdjust="spacingAndGlyphs" >CLK</text>
</g>
<g transform="translate(-0.6 -0.65)">
<path d="M331.2 526.5 L444.5 526.5 L455.2 537 L444.5 547.5 L331.2 547.5 Z" fill="none" stroke="#000" stroke-width="2.4" stroke-linejoin="miter"/>
<ellipse cx="348.5" cy="536.2" rx="5.6" ry="8" fill="#858585"/>
<g transform="translate(348.5 536.5) rotate(0)"><text x="0" y="5.2" font-size="14.4" text-anchor="middle" fill="#fcfcfc" font-family="DejaVu Sans Mono,Liberation Mono,monospace">0</text><path d="M-2.3 3.1 L2.3 -3.1" stroke="#fcfcfc" stroke-width="1.3" fill="none"/></g>
<ellipse cx="360.5" cy="536.2" rx="5.6" ry="8" fill="#858585"/>
<g transform="translate(360.5 536.5) rotate(0)"><text x="0" y="5.2" font-size="14.4" text-anchor="middle" fill="#fcfcfc" font-family="DejaVu Sans Mono,Liberation Mono,monospace">0</text><path d="M-2.3 3.1 L2.3 -3.1" stroke="#fcfcfc" stroke-width="1.3" fill="none"/></g>
<ellipse cx="372.5" cy="536.2" rx="5.6" ry="8" fill="#858585"/>
<g transform="translate(372.5 536.5) rotate(0)"><text x="0" y="5.2" font-size="14.4" text-anchor="middle" fill="#fcfcfc" font-family="DejaVu Sans Mono,Liberation Mono,monospace">0</text><path d="M-2.3 3.1 L2.3 -3.1" stroke="#fcfcfc" stroke-width="1.3" fill="none"/></g>
<ellipse cx="384.5" cy="536.2" rx="5.6" ry="8" fill="#858585"/>
<g transform="translate(384.5 536.5) rotate(0)"><text x="0" y="5.2" font-size="14.4" text-anchor="middle" fill="#fcfcfc" font-family="DejaVu Sans Mono,Liberation Mono,monospace">0</text><path d="M-2.3 3.1 L2.3 -3.1" stroke="#fcfcfc" stroke-width="1.3" fill="none"/></g>
<ellipse cx="396.5" cy="536.2" rx="5.6" ry="8" fill="#858585"/>
<g transform="translate(396.5 536.5) rotate(0)"><text x="0" y="5.2" font-size="14.4" text-anchor="middle" fill="#fcfcfc" font-family="DejaVu Sans Mono,Liberation Mono,monospace">0</text><path d="M-2.3 3.1 L2.3 -3.1" stroke="#fcfcfc" stroke-width="1.3" fill="none"/></g>
<ellipse cx="408.5" cy="536.2" rx="5.6" ry="8" fill="#858585"/>
<g transform="translate(408.5 536.5) rotate(0)"><text x="0" y="5.2" font-size="14.4" text-anchor="middle" fill="#fcfcfc" font-family="DejaVu Sans Mono,Liberation Mono,monospace">0</text><path d="M-2.3 3.1 L2.3 -3.1" stroke="#fcfcfc" stroke-width="1.3" fill="none"/></g>
<ellipse cx="420.5" cy="536.2" rx="5.6" ry="8" fill="#858585"/>
<g transform="translate(420.5 536.5) rotate(0)"><text x="0" y="5.2" font-size="14.4" text-anchor="middle" fill="#fcfcfc" font-family="DejaVu Sans Mono,Liberation Mono,monospace">0</text><path d="M-2.3 3.1 L2.3 -3.1" stroke="#fcfcfc" stroke-width="1.3" fill="none"/></g>
<ellipse cx="432.5" cy="536.2" rx="5.6" ry="8" fill="#858585"/>
<g transform="translate(432.5 536.5) rotate(0)"><text x="0" y="5.2" font-size="14.4" text-anchor="middle" fill="#fcfcfc" font-family="DejaVu Sans Mono,Liberation Mono,monospace">0</text><path d="M-2.3 3.1 L2.3 -3.1" stroke="#fcfcfc" stroke-width="1.3" fill="none"/></g>
<text x="441" y="544.5" font-size="10.5" text-anchor="middle" fill="#1c1cb4" font-family="Liberation Sans,DejaVu Sans,sans-serif" >b</text>
<text x="327" y="548" font-size="19" text-anchor="end" fill="#0303ec" font-family="DejaVu Sans Mono,Liberation Mono,monospace" font-weight="bold" textLength="7.4" lengthAdjust="spacingAndGlyphs" >I</text>
</g>
<g transform="translate(-0.6 -0.65)">
<path d="M427.2 562.5 L456.5 562.5 L467.2 573 L456.5 583.5 L427.2 583.5 Z" fill="none" stroke="#000" stroke-width="2.4" stroke-linejoin="miter"/>
<ellipse cx="444.5" cy="572.2" rx="5.6" ry="8" fill="#3c7510"/>
<g transform="translate(444.5 572.5) rotate(0)"><text x="0" y="5.2" font-size="14.4" text-anchor="middle" fill="#dff5c0" font-family="DejaVu Sans Mono,Liberation Mono,monospace">1</text></g>
<text x="453" y="580.5" font-size="10.5" text-anchor="middle" fill="#1c1cb4" font-family="Liberation Sans,DejaVu Sans,sans-serif" >b</text>
<text x="423" y="584" font-size="19" text-anchor="end" fill="#0303ec" font-family="DejaVu Sans Condensed,DejaVu Sans,Liberation Sans,sans-serif" font-weight="bold" textLength="31" lengthAdjust="spacingAndGlyphs" >WE</text>
</g>
<g transform="translate(-0.6 -0.65)">
<path d="M427.2 754.5 L456.5 754.5 L467.2 765 L456.5 775.5 L427.2 775.5 Z" fill="none" stroke="#000" stroke-width="2.4" stroke-linejoin="miter"/>
<ellipse cx="444.5" cy="764.2" rx="5.6" ry="8" fill="#858585"/>
<g transform="translate(444.5 764.5) rotate(0)"><text x="0" y="5.2" font-size="14.4" text-anchor="middle" fill="#fcfcfc" font-family="DejaVu Sans Mono,Liberation Mono,monospace">0</text><path d="M-2.3 3.1 L2.3 -3.1" stroke="#fcfcfc" stroke-width="1.3" fill="none"/></g>
<text x="453" y="772.5" font-size="10.5" text-anchor="middle" fill="#1c1cb4" font-family="Liberation Sans,DejaVu Sans,sans-serif" >b</text>
<text x="423" y="776" font-size="19" text-anchor="end" fill="#0303ec" font-family="DejaVu Sans Condensed,DejaVu Sans,Liberation Sans,sans-serif" font-weight="bold" textLength="40" lengthAdjust="spacingAndGlyphs" >MSB</text>
</g>
<g transform="translate(-0.6 -0.65)">
<path d="M427.2 790.5 L456.5 790.5 L467.2 801 L456.5 811.5 L427.2 811.5 Z" fill="none" stroke="#000" stroke-width="2.4" stroke-linejoin="miter"/>
<ellipse cx="444.5" cy="800.2" rx="5.6" ry="8" fill="#3c7510"/>
<g transform="translate(444.5 800.5) rotate(0)"><text x="0" y="5.2" font-size="14.4" text-anchor="middle" fill="#dff5c0" font-family="DejaVu Sans Mono,Liberation Mono,monospace">1</text></g>
<text x="453" y="808.5" font-size="10.5" text-anchor="middle" fill="#1c1cb4" font-family="Liberation Sans,DejaVu Sans,sans-serif" >b</text>
<text x="423" y="812" font-size="19" text-anchor="end" fill="#0303ec" font-family="DejaVu Sans Condensed,DejaVu Sans,Liberation Sans,sans-serif" font-weight="bold" textLength="33" lengthAdjust="spacingAndGlyphs" >RST</text>
</g>
<g transform="translate(-0.6 -0.65)">
<path d="M427.2 826.5 L456.5 826.5 L467.2 837 L456.5 847.5 L427.2 847.5 Z" fill="none" stroke="#000" stroke-width="2.4" stroke-linejoin="miter"/>
<ellipse cx="444.5" cy="836.2" rx="5.6" ry="8" fill="#858585"/>
<g transform="translate(444.5 836.5) rotate(0)"><text x="0" y="5.2" font-size="14.4" text-anchor="middle" fill="#fcfcfc" font-family="DejaVu Sans Mono,Liberation Mono,monospace">0</text><path d="M-2.3 3.1 L2.3 -3.1" stroke="#fcfcfc" stroke-width="1.3" fill="none"/></g>
<text x="453" y="844.5" font-size="10.5" text-anchor="middle" fill="#1c1cb4" font-family="Liberation Sans,DejaVu Sans,sans-serif" >b</text>
<text x="423" y="848" font-size="19" text-anchor="end" fill="#0303ec" font-family="DejaVu Sans Condensed,DejaVu Sans,Liberation Sans,sans-serif" font-weight="bold" textLength="85.5" lengthAdjust="spacingAndGlyphs" >DISP_CLK</text>
</g>
<circle cx="461.4" cy="440.4" r="5.7" fill="#3c7510"/>
<circle cx="461.4" cy="536.4" r="5.7" fill="#000"/>
<circle cx="473.4" cy="572.4" r="5.7" fill="#3c7510"/>
<circle cx="473.4" cy="764.4" r="5.7" fill="#828282"/>
<circle cx="473.4" cy="800.4" r="5.7" fill="#3c7510"/>
<circle cx="473.4" cy="836.4" r="5.7" fill="#828282"/>
<g transform="translate(-0.65 -0.1)">
<path d="M931.5 1124.3 L931.5 1095.5 L942 1084.2 L952.5 1095.5 L952.5 1124.3 Z" fill="none" stroke="#000" stroke-width="2.4" stroke-linejoin="miter"/>
<ellipse cx="941" cy="1107.5" rx="8" ry="5.6" fill="#3c7510"/>
<g transform="translate(941 1107.5) rotate(-90)"><text x="0" y="5.2" font-size="14.4" text-anchor="middle" fill="#dff5c0" font-family="DejaVu Sans Mono,Liberation Mono,monospace">1</text></g>
<text x="948" y="1100.5" font-size="10.5" text-anchor="middle" fill="#1c1cb4" font-family="Liberation Sans,DejaVu Sans,sans-serif" transform="rotate(-90 948 1100.5)" >b</text>
<text x="942" y="1149.3" font-size="19" text-anchor="middle" fill="#0303ec" font-family="DejaVu Sans Condensed,DejaVu Sans,Liberation Sans,sans-serif" font-weight="bold" textLength="35" lengthAdjust="spacingAndGlyphs" >VCC</text>
</g>
<g transform="translate(-0.65 -0.1)">
<path d="M991.5 1124.3 L991.5 1095.5 L1002 1084.2 L1012.5 1095.5 L1012.5 1124.3 Z" fill="none" stroke="#000" stroke-width="2.4" stroke-linejoin="miter"/>
<ellipse cx="1001" cy="1107.5" rx="8" ry="5.6" fill="#858585"/>
<g transform="translate(1001 1107.5) rotate(-90)"><text x="0" y="5.2" font-size="14.4" text-anchor="middle" fill="#fcfcfc" font-family="DejaVu Sans Mono,Liberation Mono,monospace">0</text><path d="M-2.3 3.1 L2.3 -3.1" stroke="#fcfcfc" stroke-width="1.3" fill="none"/></g>
<text x="1008" y="1100.5" font-size="10.5" text-anchor="middle" fill="#1c1cb4" font-family="Liberation Sans,DejaVu Sans,sans-serif" transform="rotate(-90 1008 1100.5)" >b</text>
<text x="1002" y="1149.3" font-size="19" text-anchor="middle" fill="#0303ec" font-family="DejaVu Sans Condensed,DejaVu Sans,Liberation Sans,sans-serif" font-weight="bold" textLength="43" lengthAdjust="spacingAndGlyphs" >GND</text>
</g>
<circle cx="941.4" cy="1076.4" r="5.7" fill="#3c7510"/>
<circle cx="1001.4" cy="1076.4" r="5.7" fill="#828282"/>
<path d="M1074 873 V861 H1062 V741 H1230 V861 H1218 V873" fill="none" stroke="#000" stroke-width="2.4"/>
<rect x="1062" y="873" width="168" height="24" fill="none" stroke="#000" stroke-width="2.4"/>
<rect x="1062" y="897" width="168" height="24" fill="none" stroke="#000" stroke-width="2.4"/>
<text x="1147" y="756" font-size="16" text-anchor="middle" fill="#000" font-family="Liberation Sans,DejaVu Sans,sans-serif" textLength="37.5" lengthAdjust="spacingAndGlyphs" >CTR2</text>
<path d="M1038 765 L1062 765" fill="none" stroke="#000" stroke-width="2.4" stroke-linecap="butt"/>
<path d="M1038 777 H1062 M1045.5 777 V789 H1052.5 M1038 801 H1062 M1045.5 801 V813 H1052.5 M1038 825 H1062 M1038 837 H1062 M1045.5 837 V849 H1062" fill="none" stroke="#000" stroke-width="2.4"/>
<circle cx="1057.2" cy="789" r="4.6" fill="none" stroke="#000" stroke-width="2.4"/><circle cx="1057.2" cy="813" r="4.6" fill="none" stroke="#000" stroke-width="2.4"/>
<path d="M1062 831.5 L1070.8 837 L1062 842.5" fill="none" stroke="#000" stroke-width="2.4" stroke-linejoin="miter"/>
<path d="M1062 843.5 L1070.8 849 L1062 854.5" fill="none" stroke="#000" stroke-width="2.4" stroke-linejoin="miter"/>
<text x="1074" y="775" font-size="16" text-anchor="start" fill="#000" font-family="DejaVu Sans,Liberation Sans,sans-serif" >R</text>
<text x="1074" y="787" font-size="16" text-anchor="start" fill="#000" font-family="DejaVu Sans,Liberation Sans,sans-serif" textLength="70" lengthAdjust="spacingAndGlyphs" >M1 [load]</text>
<text x="1074" y="799" font-size="16" text-anchor="start" fill="#000" font-family="DejaVu Sans,Liberation Sans,sans-serif" textLength="81" lengthAdjust="spacingAndGlyphs" >M2 [count]</text>
<text x="1074" y="811" font-size="16" text-anchor="start" fill="#000" font-family="DejaVu Sans,Liberation Sans,sans-serif" textLength="57.5" lengthAdjust="spacingAndGlyphs" >M3 [up]</text>
<text x="1074" y="823" font-size="16" text-anchor="start" fill="#000" font-family="DejaVu Sans,Liberation Sans,sans-serif" textLength="80" lengthAdjust="spacingAndGlyphs" >M4 [down]</text>
<text x="1074" y="835" font-size="16" text-anchor="start" fill="#000" font-family="DejaVu Sans,Liberation Sans,sans-serif" textLength="20.5" lengthAdjust="spacingAndGlyphs" >G5</text>
<text x="1074" y="847" font-size="16" text-anchor="start" fill="#000" font-family="DejaVu Sans,Liberation Sans,sans-serif" textLength="68" lengthAdjust="spacingAndGlyphs" >2,3,5+/C6</text>
<text x="1074" y="859" font-size="16" text-anchor="start" fill="#000" font-family="DejaVu Sans,Liberation Sans,sans-serif" textLength="39" lengthAdjust="spacingAndGlyphs" >2,4,5-</text>
<text x="1227" y="809.7" font-size="16" text-anchor="end" fill="#000" font-family="DejaVu Sans,Liberation Sans,sans-serif" textLength="63" lengthAdjust="spacingAndGlyphs" >3CT=0x3</text>
<text x="1227" y="821.7" font-size="16" text-anchor="end" fill="#000" font-family="DejaVu Sans,Liberation Sans,sans-serif" textLength="45" lengthAdjust="spacingAndGlyphs" >4CT=0</text>
<rect x="1171.5" y="767.5" width="9" height="19.5" fill="#c4c2bd"/>
<text x="1176" y="786" font-size="16" text-anchor="middle" fill="#4a4a4a" font-family="Liberation Sans,DejaVu Sans,sans-serif" >0</text>
<path d="M1230 801 H1254 M1248 801 V813 H1230" fill="none" stroke="#000" stroke-width="2.4"/>
<circle cx="1253.4" cy="800.4" r="5.7" fill="#828282"/>
<text x="1063" y="894" font-size="16" text-anchor="start" fill="#000" font-family="Liberation Sans,DejaVu Sans,sans-serif" textLength="32" lengthAdjust="spacingAndGlyphs" >1,6D</text>
<text x="1063" y="918" font-size="16" text-anchor="start" fill="#000" font-family="Liberation Sans,DejaVu Sans,sans-serif" textLength="32" lengthAdjust="spacingAndGlyphs" >1,6D</text>
<rect x="1153" y="877" width="10" height="18.5" fill="#c4c2bd"/><rect x="1153" y="901" width="10" height="18.5" fill="#c4c2bd"/>
<text x="1158" y="894" font-size="16" text-anchor="middle" fill="#4a4a4a" font-family="Liberation Sans,DejaVu Sans,sans-serif" >0</text>
<text x="1158" y="918" font-size="16" text-anchor="middle" fill="#4a4a4a" font-family="Liberation Sans,DejaVu Sans,sans-serif" >0</text>
<path d="M1038 873 L1044 880 V904.5" fill="none" stroke="#000" stroke-width="4.8" stroke-linejoin="round"/>
<path d="M1044 879.5 L1050 885 H1062 M1044 903.5 L1050 909 H1062" fill="none" stroke="#000" stroke-width="2.4"/>
<text x="1052" y="882.5" font-size="8.5" text-anchor="middle" fill="#111" font-family="Liberation Sans,DejaVu Sans,sans-serif" >0</text>
<text x="1052" y="906.5" font-size="8.5" text-anchor="middle" fill="#111" font-family="Liberation Sans,DejaVu Sans,sans-serif" >1</text>
<path d="M1254 873 L1248 880 V904" fill="none" stroke="#000" stroke-width="4.4" stroke-linejoin="round"/>
<path d="M1230 885 H1242 L1247.5 880 M1230 909 H1242 L1247.5 904" fill="none" stroke="#000" stroke-width="2.4"/>
<text x="1238.5" y="882.5" font-size="8.5" text-anchor="middle" fill="#111" font-family="Liberation Sans,DejaVu Sans,sans-serif" >0</text>
<text x="1238.5" y="906.5" font-size="8.5" text-anchor="middle" fill="#111" font-family="Liberation Sans,DejaVu Sans,sans-serif" >1</text>
<circle cx="1037.4" cy="764.4" r="5.7" fill="#3c7510"/>
<circle cx="1037.4" cy="776.4" r="5.7" fill="#828282"/>
<circle cx="1037.4" cy="800.4" r="5.7" fill="#3c7510"/>
<circle cx="1037.4" cy="824.4" r="5.7" fill="#3c7510"/>
<circle cx="1037.4" cy="836.4" r="5.7" fill="#828282"/>
<circle cx="1037.4" cy="872.4" r="5.7" fill="#000"/>
<circle cx="1253.4" cy="872.4" r="5.7" fill="#000"/>
<path d="M989 880.5 H1007 L1014 873" fill="none" stroke="#000" stroke-width="5.4" stroke-linejoin="round"/>
<path d="M990 883 L990 897" fill="none" stroke="#828282" stroke-width="3.2" stroke-linecap="butt"/>
<path d="M1002 883 L1002 897" fill="none" stroke="#828282" stroke-width="3.2" stroke-linecap="butt"/>
<text x="994.5" y="883.5" font-size="7.5" text-anchor="start" fill="#111" font-family="Liberation Sans,DejaVu Sans,sans-serif" transform="rotate(90 994.5 883.5)" >1</text>
<text x="1006" y="883.5" font-size="7.5" text-anchor="start" fill="#111" font-family="Liberation Sans,DejaVu Sans,sans-serif" transform="rotate(90 1006 883.5)" >0</text>
<circle cx="1013.4" cy="872.4" r="5.7" fill="#000"/>
<circle cx="989.4" cy="896.4" r="5.7" fill="#828282"/>
<circle cx="1001.4" cy="896.4" r="5.7" fill="#828282"/>
</g>
</g></svg>
</body></html>
